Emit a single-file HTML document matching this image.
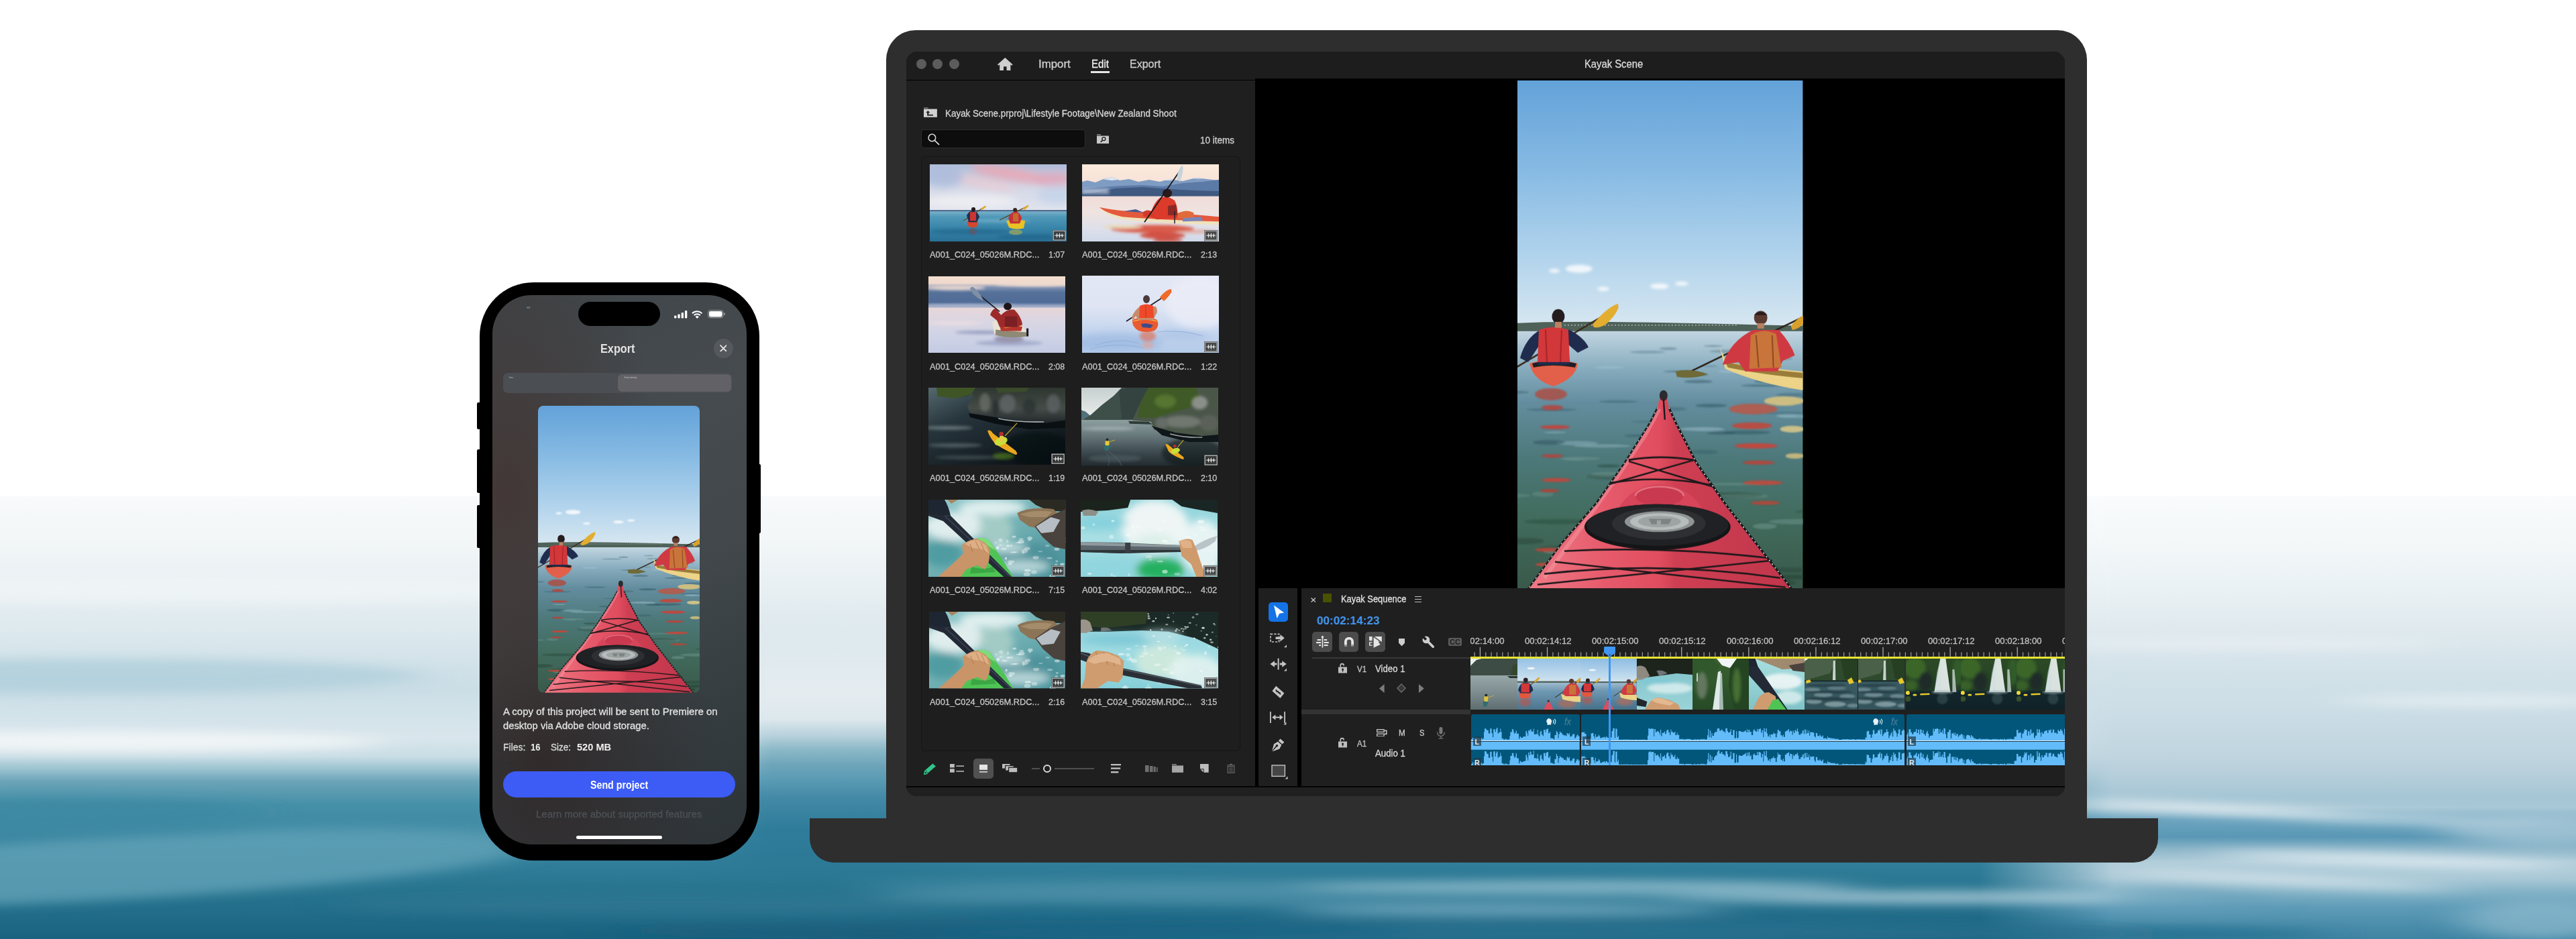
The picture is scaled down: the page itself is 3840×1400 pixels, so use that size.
<!DOCTYPE html><html lang="en"><head><meta charset="utf-8"><title>Premiere – Kayak Scene</title><style>
*{margin:0;padding:0;box-sizing:border-box}
html,body{width:3840px;height:1400px;overflow:hidden;background:#fff}
body{position:relative;font-family:"Liberation Sans",sans-serif;}
.a{position:absolute}
.t{position:absolute;white-space:pre;transform-origin:0 50%;-webkit-text-stroke:.3px currentColor}
svg{position:absolute;overflow:hidden}
</style></head><body>
<svg width="0" height="0" style="left:0;top:0"><defs><filter id="b1" x="-20%" y="-40%" width="140%" height="180%"><feGaussianBlur stdDeviation="1.2"/></filter><filter id="b2" x="-20%" y="-20%" width="140%" height="140%"><feGaussianBlur stdDeviation="2"/></filter><filter id="b4" x="-30%" y="-30%" width="160%" height="160%"><feGaussianBlur stdDeviation="6"/></filter><linearGradient id="kSky" x1="0" y1="0" x2="0" y2="1"><stop offset="0" stop-color="#63a2d9"/><stop offset="0.35" stop-color="#86bae3"/><stop offset="0.7" stop-color="#b1d3ec"/><stop offset="1" stop-color="#d9e8f1"/></linearGradient><linearGradient id="kWat" x1="0" y1="0" x2="0" y2="1"><stop offset="0" stop-color="#c3d6e2"/><stop offset="0.07" stop-color="#a6c2d1"/><stop offset="0.15" stop-color="#86abbd"/><stop offset="0.28" stop-color="#638d9e"/><stop offset="0.5" stop-color="#4c7879"/><stop offset="0.72" stop-color="#426c5e"/><stop offset="1" stop-color="#39594a"/></linearGradient><linearGradient id="kBow" x1="0" y1="0" x2="1" y2="0"><stop offset="0" stop-color="#ef7a86"/><stop offset="0.3" stop-color="#e65a6b"/><stop offset="0.5" stop-color="#e04d5f"/><stop offset="0.56" stop-color="#cf3f53"/><stop offset="1" stop-color="#c0364b"/></linearGradient><linearGradient id="p1s" x1="0" y1="0" x2="0" y2="1"><stop offset="0" stop-color="#aebcd9"/><stop offset="0.45" stop-color="#d3d7e6"/><stop offset="1" stop-color="#e0e4ee"/></linearGradient><linearGradient id="p1w" x1="0" y1="0" x2="0" y2="1"><stop offset="0" stop-color="#7fb3cb"/><stop offset="0.2" stop-color="#4f98b8"/><stop offset="0.6" stop-color="#3683a8"/><stop offset="1" stop-color="#2a7097"/></linearGradient><linearGradient id="p2s" x1="0" y1="0" x2="0" y2="1"><stop offset="0" stop-color="#fbeadb"/><stop offset="1" stop-color="#f3dcd6"/></linearGradient><linearGradient id="p2w" x1="0" y1="0" x2="0" y2="1"><stop offset="0" stop-color="#f0dcd8"/><stop offset="0.35" stop-color="#efe3e0"/><stop offset="0.7" stop-color="#dfe0ea"/><stop offset="1" stop-color="#cfd9ea"/></linearGradient><linearGradient id="p3s" x1="0" y1="0" x2="0" y2="1"><stop offset="0" stop-color="#f4dfcf"/><stop offset="0.22" stop-color="#eed8cd"/><stop offset="0.34" stop-color="#7f91b2"/><stop offset="0.5" stop-color="#55719a"/><stop offset="0.82" stop-color="#506c96"/><stop offset="0.9" stop-color="#8c9dbd"/><stop offset="1" stop-color="#b9bfd4"/></linearGradient><linearGradient id="p3w" x1="0" y1="0" x2="0" y2="1"><stop offset="0" stop-color="#e7d6d8"/><stop offset="0.25" stop-color="#dcd6e2"/><stop offset="0.6" stop-color="#cfd3e6"/><stop offset="1" stop-color="#c3cbe3"/></linearGradient><linearGradient id="p4b" x1="0" y1="0" x2="0" y2="1"><stop offset="0" stop-color="#e3e7f4"/><stop offset="0.4" stop-color="#dfe5f3"/><stop offset="0.7" stop-color="#c6d6ee"/><stop offset="1" stop-color="#b4cbe9"/></linearGradient><linearGradient id="p5w" x1="0" y1="0" x2="0.8" y2="1"><stop offset="0" stop-color="#55696e"/><stop offset="0.35" stop-color="#27353c"/><stop offset="1" stop-color="#0b1116"/></linearGradient><linearGradient id="p5c" x1="0" y1="0" x2="0" y2="1"><stop offset="0" stop-color="#2e3630"/><stop offset="0.6" stop-color="#454c48"/><stop offset="1" stop-color="#22282a"/></linearGradient><linearGradient id="p6w" x1="0" y1="0" x2="0" y2="1"><stop offset="0" stop-color="#8e9fa0"/><stop offset="0.3" stop-color="#6c7d80"/><stop offset="0.7" stop-color="#3d4a4f"/><stop offset="1" stop-color="#222b30"/></linearGradient><linearGradient id="p6s" x1="0" y1="0" x2="0" y2="1"><stop offset="0" stop-color="#c7d0cf"/><stop offset="1" stop-color="#eef1ef"/></linearGradient><linearGradient id="p7w" x1="0" y1="0" x2="1" y2="1"><stop offset="0" stop-color="#93cacd"/><stop offset="0.4" stop-color="#78b5b8"/><stop offset="1" stop-color="#458f98"/></linearGradient><linearGradient id="p8w" x1="0" y1="0" x2="0" y2="1"><stop offset="0" stop-color="#8fd2da"/><stop offset="0.5" stop-color="#a9dfe4"/><stop offset="1" stop-color="#8fd4da"/></linearGradient><linearGradient id="p10w" x1="0" y1="0" x2="0" y2="1"><stop offset="0" stop-color="#8fd0dc"/><stop offset="0.5" stop-color="#9fdbe2"/><stop offset="1" stop-color="#86cfd8"/></linearGradient><linearGradient id="cfw" x1="0" y1="0" x2="0" y2="1"><stop offset="0" stop-color="#98a7a8"/><stop offset="0.5" stop-color="#7d8d8f"/><stop offset="1" stop-color="#5d6d70"/></linearGradient><linearGradient id="cks" x1="0" y1="0" x2="0" y2="1"><stop offset="0" stop-color="#8fbde3"/><stop offset="1" stop-color="#d3e5f0"/></linearGradient><linearGradient id="ckw" x1="0" y1="0" x2="0" y2="1"><stop offset="0" stop-color="#a3bfd0"/><stop offset="0.3" stop-color="#6f98b2"/><stop offset="1" stop-color="#45708a"/></linearGradient><linearGradient id="cw1" x1="0" y1="0" x2="0" y2="1"><stop offset="0" stop-color="#7fc2c9"/><stop offset="1" stop-color="#9ad3d8"/></linearGradient><linearGradient id="cfa" x1="0" y1="0" x2="0" y2="1"><stop offset="0" stop-color="#3a6230"/><stop offset="1" stop-color="#264a26"/></linearGradient><linearGradient id="cw2" x1="0" y1="0" x2="0" y2="1"><stop offset="0" stop-color="#a9dfe0"/><stop offset="1" stop-color="#7fc2c6"/></linearGradient><linearGradient id="cla" x1="0" y1="0" x2="0" y2="1"><stop offset="0" stop-color="#4a6a72"/><stop offset="0.5" stop-color="#3a5a62"/><stop offset="1" stop-color="#33525a"/></linearGradient><linearGradient id="cf3" x1="0" y1="0" x2="0" y2="1"><stop offset="0" stop-color="#2c4a26"/><stop offset="0.6" stop-color="#233f24"/><stop offset="0.66" stop-color="#12262c"/><stop offset="1" stop-color="#102228"/></linearGradient></defs><symbol id="kayak" viewBox="0 0 426 758" preserveAspectRatio="none"><rect width="426" height="374" fill="url(#kSky)"/><g fill="#fff" opacity=".8" filter="url(#b2)"><ellipse cx="92" cy="281" rx="20" ry="6"/><ellipse cx="212" cy="307" rx="14" ry="4"/><ellipse cx="128" cy="311" rx="9" ry="3"/><ellipse cx="245" cy="303" rx="10" ry="3"/><ellipse cx="55" cy="284" rx="8" ry="3"/></g><rect y="373" width="426" height="385" fill="url(#kWat)"/><path d="M0 362 L40 360.5 L120 360 L200 361 L300 363 L380 365 L426 366 V374 H0 Z" fill="#4f6259"/><path d="M70 365 H330" stroke="#c9d2cf" stroke-width="1.6" stroke-dasharray="2 3" opacity=".75"/><g filter="url(#b1)"><ellipse cx="321" cy="619" rx="45" ry="4.2" fill="#213f31" opacity="0.48"/><ellipse cx="194" cy="405" rx="26" ry="1.8" fill="#274a56" opacity="0.28"/><ellipse cx="93" cy="564" rx="31" ry="2.8" fill="#7fa39a" opacity="0.32"/><ellipse cx="402" cy="496" rx="32" ry="1.5" fill="#274a56" opacity="0.28"/><ellipse cx="38" cy="617" rx="16" ry="4.0" fill="#7fa39a" opacity="0.31"/><ellipse cx="381" cy="749" rx="34" ry="5.5" fill="#213f31" opacity="0.42"/><ellipse cx="413" cy="469" rx="27" ry="2.8" fill="#274a56" opacity="0.32"/><ellipse cx="56" cy="525" rx="17" ry="1.4" fill="#9fc0cf" opacity="0.43"/><ellipse cx="292" cy="396" rx="14" ry="1.2" fill="#274a56" opacity="0.37"/><ellipse cx="201" cy="509" rx="31" ry="1.3" fill="#274a56" opacity="0.26"/><ellipse cx="369" cy="665" rx="18" ry="4.2" fill="#7fa39a" opacity="0.42"/><ellipse cx="1" cy="398" rx="11" ry="2.1" fill="#9fc0cf" opacity="0.48"/><ellipse cx="413" cy="730" rx="36" ry="3.3" fill="#213f31" opacity="0.44"/><ellipse cx="324" cy="434" rx="26" ry="2.3" fill="#9fc0cf" opacity="0.53"/><ellipse cx="137" cy="428" rx="22" ry="2.3" fill="#9fc0cf" opacity="0.53"/><ellipse cx="124" cy="591" rx="26" ry="2.0" fill="#7fa39a" opacity="0.29"/><ellipse cx="438" cy="643" rx="23" ry="1.9" fill="#213f31" opacity="0.38"/><ellipse cx="89" cy="541" rx="31" ry="3.2" fill="#9fc0cf" opacity="0.38"/><ellipse cx="401" cy="415" rx="9" ry="1.6" fill="#274a56" opacity="0.28"/><ellipse cx="417" cy="658" rx="42" ry="4.1" fill="#7fa39a" opacity="0.38"/><ellipse cx="369" cy="449" rx="16" ry="1.8" fill="#274a56" opacity="0.46"/><ellipse cx="189" cy="746" rx="44" ry="4.7" fill="#7fa39a" opacity="0.34"/><ellipse cx="47" cy="540" rx="24" ry="3.6" fill="#274a56" opacity="0.41"/><ellipse cx="136" cy="575" rx="17" ry="2.1" fill="#213f31" opacity="0.47"/><ellipse cx="342" cy="525" rx="35" ry="2.8" fill="#274a56" opacity="0.44"/><ellipse cx="304" cy="526" rx="21" ry="2.3" fill="#274a56" opacity="0.42"/><ellipse cx="415" cy="501" rx="29" ry="2.4" fill="#9fc0cf" opacity="0.41"/><ellipse cx="289" cy="485" rx="23" ry="2.7" fill="#274a56" opacity="0.45"/><ellipse cx="276" cy="520" rx="33" ry="3.0" fill="#9fc0cf" opacity="0.50"/><ellipse cx="297" cy="708" rx="62" ry="5.1" fill="#213f31" opacity="0.38"/><ellipse cx="365" cy="455" rx="31" ry="1.8" fill="#274a56" opacity="0.43"/><ellipse cx="59" cy="658" rx="48" ry="3.5" fill="#213f31" opacity="0.36"/><ellipse cx="336" cy="620" rx="39" ry="3.6" fill="#7fa39a" opacity="0.30"/><ellipse cx="279" cy="554" rx="20" ry="3.0" fill="#274a56" opacity="0.26"/><ellipse cx="84" cy="565" rx="16" ry="1.8" fill="#7fa39a" opacity="0.30"/><ellipse cx="-4" cy="465" rx="21" ry="1.7" fill="#274a56" opacity="0.40"/><ellipse cx="395" cy="481" rx="11" ry="1.9" fill="#9fc0cf" opacity="0.37"/><ellipse cx="362" cy="436" rx="17" ry="1.0" fill="#274a56" opacity="0.27"/><ellipse cx="136" cy="591" rx="35" ry="4.0" fill="#213f31" opacity="0.35"/><ellipse cx="275" cy="688" rx="34" ry="2.3" fill="#213f31" opacity="0.39"/><ellipse cx="425" cy="740" rx="49" ry="3.3" fill="#213f31" opacity="0.25"/><ellipse cx="240" cy="434" rx="22" ry="1.2" fill="#274a56" opacity="0.47"/><ellipse cx="179" cy="530" rx="19" ry="1.9" fill="#274a56" opacity="0.34"/><ellipse cx="400" cy="741" rx="48" ry="3.0" fill="#213f31" opacity="0.37"/><ellipse cx="127" cy="545" rx="43" ry="2.5" fill="#9fc0cf" opacity="0.39"/><ellipse cx="266" cy="439" rx="19" ry="1.4" fill="#274a56" opacity="0.46"/><ellipse cx="225" cy="400" rx="13" ry="2.1" fill="#274a56" opacity="0.31"/><ellipse cx="51" cy="491" rx="37" ry="1.7" fill="#274a56" opacity="0.37"/><ellipse cx="258" cy="627" rx="44" ry="2.0" fill="#213f31" opacity="0.33"/><ellipse cx="135" cy="587" rx="25" ry="2.9" fill="#7fa39a" opacity="0.36"/><ellipse cx="252" cy="663" rx="19" ry="2.6" fill="#7fa39a" opacity="0.52"/><ellipse cx="231" cy="715" rx="20" ry="4.6" fill="#7fa39a" opacity="0.42"/><ellipse cx="271" cy="650" rx="36" ry="4.4" fill="#7fa39a" opacity="0.37"/><ellipse cx="70" cy="702" rx="32" ry="4.6" fill="#7fa39a" opacity="0.50"/><ellipse cx="179" cy="645" rx="28" ry="4.0" fill="#213f31" opacity="0.29"/><ellipse cx="233" cy="567" rx="30" ry="2.2" fill="#7fa39a" opacity="0.43"/><ellipse cx="11" cy="687" rx="28" ry="4.5" fill="#213f31" opacity="0.42"/><ellipse cx="312" cy="404" rx="26" ry="2.2" fill="#274a56" opacity="0.26"/><ellipse cx="81" cy="698" rx="47" ry="5.0" fill="#213f31" opacity="0.28"/><ellipse cx="402" cy="500" rx="16" ry="2.4" fill="#9fc0cf" opacity="0.30"/><ellipse cx="0" cy="619" rx="20" ry="2.7" fill="#7fa39a" opacity="0.27"/><ellipse cx="321" cy="602" rx="46" ry="1.9" fill="#7fa39a" opacity="0.34"/><ellipse cx="205" cy="611" rx="49" ry="2.6" fill="#7fa39a" opacity="0.46"/><ellipse cx="270" cy="449" rx="21" ry="2.5" fill="#274a56" opacity="0.41"/><ellipse cx="234" cy="490" rx="18" ry="2.6" fill="#274a56" opacity="0.28"/><ellipse cx="151" cy="479" rx="29" ry="1.5" fill="#274a56" opacity="0.41"/><ellipse cx="287" cy="426" rx="11" ry="1.1" fill="#274a56" opacity="0.31"/><ellipse cx="201" cy="711" rx="34" ry="4.6" fill="#7fa39a" opacity="0.47"/><ellipse cx="49" cy="414" rx="27" ry="1.9" fill="#9fc0cf" opacity="0.28"/><ellipse cx="286" cy="745" rx="59" ry="2.6" fill="#213f31" opacity="0.34"/></g><g filter="url(#b1)" opacity=".9"><ellipse cx="50" cy="468" rx="24" ry="9" fill="#a8524c"/><ellipse cx="52" cy="488" rx="16" ry="4" fill="#b04a44"/><ellipse cx="56" cy="517" rx="22" ry="3" fill="#c2423c"/><ellipse cx="52" cy="560" rx="16" ry="2.5" fill="#b8423a"/><ellipse cx="58" cy="596" rx="22" ry="3" fill="#c2463c"/><ellipse cx="48" cy="612" rx="14" ry="2.5" fill="#b4423a"/><ellipse cx="46" cy="700" rx="20" ry="3" fill="#b8443a"/><ellipse cx="52" cy="722" rx="26" ry="3" fill="#c24a3e"/><ellipse cx="352" cy="490" rx="36" ry="8" fill="#b55a4c"/><ellipse cx="350" cy="515" rx="30" ry="5" fill="#c04a3e"/><ellipse cx="356" cy="545" rx="32" ry="4" fill="#c8443a"/><ellipse cx="360" cy="570" rx="24" ry="3" fill="#b8443a"/><ellipse cx="366" cy="600" rx="30" ry="3.5" fill="#c2483c"/><ellipse cx="370" cy="630" rx="22" ry="3" fill="#b4463a"/><ellipse cx="398" cy="478" rx="30" ry="7" fill="#d8c27f"/><ellipse cx="410" cy="520" rx="18" ry="5" fill="#d9c78a"/><ellipse cx="414" cy="560" rx="14" ry="4" fill="#cdbb80"/></g><path d="M-2 428 L150 338" stroke="#3a2a18" stroke-width="2.5"/><path d="M112 364 Q134 338 150 333 Q154 342 134 362 Q124 370 114 368 Z" fill="#e3ad2f"/><path d="M18 422 Q52 412 90 422 Q88 444 54 456 Q24 448 18 422 Z" fill="#e2604a"/><path d="M22 422 Q52 414 88 422 L86 428 Q52 422 24 428 Z" fill="#1d1d22"/><path d="M4 414 Q12 384 34 372 L78 372 Q100 384 106 398 L90 406 L76 394 L78 424 L30 424 L32 396 L16 420 Z" fill="#1f2c4e"/><path d="M32 372 Q54 364 76 372 L78 420 L30 420 Z" fill="#d2373a"/><path d="M42 372 L44 420 M66 372 L64 420" stroke="#a82428" stroke-width="2"/><ellipse cx="61" cy="352" rx="9.5" ry="11" fill="#241c1e"/><rect x="56" y="360" width="10" height="9" fill="#b98262"/><path d="M246 440 L428 352" stroke="#2a2018" stroke-width="2.5"/><path d="M236 434 Q258 428 284 438 Q262 446 238 442 Z" fill="#6f6a38"/><path d="M408 366 Q420 352 428 350 L428 362 Q418 372 410 372 Z" fill="#d9a12b"/><path d="M302 398 L310 430 Q360 452 426 462 L426 434 Q360 428 312 420 Z" fill="#ecd387"/><path d="M310 420 Q360 430 426 436 L426 444 Q360 438 314 428 Z" fill="#9a7c3a"/><path d="M306 424 Q318 388 352 372 L390 372 Q408 392 414 410 L396 418 L388 434 L340 434 L330 420 Z" fill="#cf3a42"/><path d="M348 380 Q366 368 386 378 L394 428 L346 430 Z" fill="#c9743a"/><path d="M356 380 L360 428 M380 380 L382 428" stroke="#8d4a22" stroke-width="2"/><ellipse cx="363" cy="354" rx="10" ry="10.5" fill="#5a3a30"/><path d="M353 350 Q363 340 373 350 Z" fill="#2a1c1c"/><rect x="358" y="362" width="10" height="8" fill="#b77f5f"/><path d="M218 465 Q223 468 226 488 L236 510 L267 570 L309 630 L355 689 L409 758 H16 L67 689 L118 630 L160 570 L198 510 L209 488 Q212 468 218 465 Z" fill="url(#kBow)"/><path d="M212 490 L190 530 L150 590 L100 660 L40 742" stroke="#f6a0a8" stroke-width="6" fill="none" opacity=".45"/><ellipse cx="218" cy="470" rx="6" ry="8" fill="#2b2b2e"/><path d="M218 476 L220 506" stroke="#1d1a1c" stroke-width="2.4"/><g stroke="#1f191b" stroke-width="2.6" fill="none"><path d="M166 566 Q214 558 262 566"/><path d="M140 600 Q214 588 292 604"/><path d="M166 568 L292 606 M264 566 L138 602"/><path d="M70 702 Q214 694 372 712"/><path d="M40 736 Q214 716 392 742"/><path d="M30 752 L380 716 M56 718 L400 756"/></g><path d="M226 488 L236 510 L267 570 L309 630 L355 689 L409 758" stroke="#15181a" stroke-width="3" fill="none"/><path d="M226 488 L236 510 L267 570 L309 630 L355 689 L409 758" stroke="#e9e9e9" stroke-width="1.6" stroke-dasharray="2 5" fill="none"/><path d="M209 488 L198 510 L160 570 L118 630 L67 689 L16 758" stroke="#1a1c1e" stroke-width="2.6" fill="none"/><path d="M209 488 L198 510 L160 570 L118 630 L67 689 L16 758" stroke="#dcdcdc" stroke-width="1.4" stroke-dasharray="2 6" fill="none"/><path d="M150 640 Q168 606 212 602 Q258 606 276 640 Z" fill="#d6455a"/><ellipse cx="212" cy="620" rx="36" ry="14" fill="#c93a50"/><path d="M176 620 A36 14 0 0 1 248 620" fill="none" stroke="#f08c98" stroke-width="2.4" opacity=".7"/><ellipse cx="209" cy="666" rx="109" ry="34" fill="#141517"/><ellipse cx="209" cy="663" rx="106" ry="31" fill="#202124"/><ellipse cx="211" cy="661" rx="70" ry="24" fill="#2e2f33"/><ellipse cx="212" cy="658" rx="52" ry="15.5" fill="#8f9595"/><ellipse cx="212" cy="658" rx="44" ry="12.5" fill="#b7bcbc"/><ellipse cx="212" cy="658" rx="32" ry="8.5" fill="#9ea4a4"/><path d="M196 654 H230 L226 662 H214 V656 H208 V662 H200 Z" fill="#7d8383"/></symbol><symbol id="p1" viewBox="0 0 204 115" preserveAspectRatio="none"><rect width="204" height="70" fill="url(#p1s)"/><g filter="url(#b4)"><ellipse cx="120" cy="14" rx="60" ry="10" fill="#e9a9b6" opacity=".9" transform="rotate(10 120 14)"/><ellipse cx="185" cy="22" rx="30" ry="10" fill="#e3a2b6" opacity=".8"/><ellipse cx="70" cy="26" rx="60" ry="7" fill="#efc9cf" opacity=".7" transform="rotate(12 70 26)"/><ellipse cx="20" cy="18" rx="30" ry="16" fill="#a9bbdc" opacity=".8"/><ellipse cx="190" cy="45" rx="30" ry="14" fill="#c3d3ea" opacity=".8"/><ellipse cx="60" cy="55" rx="70" ry="10" fill="#f1f1f4" opacity=".8"/></g><rect y="69" width="204" height="46" fill="url(#p1w)"/><rect y="68" width="204" height="2" fill="#4b6588"/><g filter="url(#b2)" opacity=".5"><ellipse cx="60" cy="100" rx="60" ry="4" fill="#1f5d84"/><ellipse cx="150" cy="108" rx="50" ry="4" fill="#1f5d84"/><ellipse cx="100" cy="84" rx="50" ry="2" fill="#9ccbe0"/></g><path d="M50 84 L82 63" stroke="#5b4a20" stroke-width="1.2"/><path d="M76 66 L83 61.5 L84 63.5 L78 68 Z" fill="#e2a92a"/><path d="M55 85 Q64 80 72 85 L70 93 Q64 95 58 93 Z" fill="#d4472f"/><path d="M55 76 Q58 70 64 69 Q71 70 74 78 L70 86 L58 86 Z" fill="#232e4c"/><rect x="60" y="71" width="9" height="13" fill="#cf3434"/><circle cx="65" cy="67" r="3" fill="#20181a"/><ellipse cx="64" cy="100" rx="6" ry="5" fill="#7a4a55" opacity=".5"/><path d="M104 83 L146 62" stroke="#5b4a20" stroke-width="1.2"/><path d="M138 66 L146 60.5 L147.5 62.5 L141 68 Z" fill="#e2a92a"/><path d="M114 84 Q128 80 142 84 L140 95 Q128 98 118 94 Z" fill="#e9c224"/><path d="M117 80 Q120 72 127 70 Q134 71 137 80 L134 88 L120 88 Z" fill="#c6303a"/><rect x="124" y="73" width="8" height="12" fill="#c46a2e"/><circle cx="127" cy="68" r="3" fill="#3a2420"/><ellipse cx="128" cy="101" rx="10" ry="4" fill="#b5b04a" opacity=".6"/></symbol><symbol id="p2" viewBox="0 0 204 115" preserveAspectRatio="none"><rect width="204" height="50" fill="url(#p2s)"/><path d="M0 26 L8 24 L20 27 L34 21 L46 19 L56 24 L70 22 L84 26 L100 23 L116 26 L130 22 L150 25 L170 20 L186 22 L204 24 V48 H0 Z" fill="#7f9cc3"/><path d="M30 22 L46 19 L54 23 L44 24 Z M120 24 L130 22 L138 24 Z M164 21 L170 20 L180 22 Z" fill="#dfe6f1"/><path d="M0 36 L30 34 L60 32 L90 31 L120 33 L150 28 L180 26 L204 23 V48 H0 Z" fill="#5c7aa6"/><path d="M0 44 L20 42 L50 36 L90 34 L130 37 L170 39 L204 40 V48.5 H0 Z" fill="#3f5980"/><rect y="36" width="40" height="8" fill="#dfe3ee" opacity=".55" filter="url(#b2)"/><rect y="47.5" width="204" height="67.5" fill="url(#p2w)"/><g filter="url(#b2)"><ellipse cx="105" cy="96" rx="62" ry="6" fill="#d8452e" opacity=".85"/><ellipse cx="120" cy="106" rx="34" ry="5" fill="#d03a28" opacity=".85"/><ellipse cx="60" cy="93" rx="30" ry="2.5" fill="#e9d9b8"/><ellipse cx="128" cy="113" rx="22" ry="3" fill="#c8402e" opacity=".8"/><ellipse cx="170" cy="100" rx="30" ry="3" fill="#e59580" opacity=".6"/></g><path d="M26 64 Q60 74 110 76 L204 82 V90 Q120 88 60 82 Q36 76 26 64 Z" fill="#efe2bd"/><path d="M26 64 Q60 71 110 72 Q160 74 204 78 V85 Q120 83 60 78 Q36 73 26 64 Z" fill="#e4593c"/><path d="M62 70 L80 67 L92 72 Z" fill="#47598f"/><path d="M140 74 Q156 66 166 72 L168 80 L140 80 Z" fill="#e16a3a"/><path d="M150 80 L178 78 L180 84 L150 85 Z" fill="#7a86b8"/><path d="M102 78 Q104 60 116 50 Q128 46 138 54 Q144 66 142 80 L112 82 Z" fill="#dc3a2a"/><path d="M90 72 Q96 66 104 70 L108 78 L92 78 Z" fill="#d43a2a"/><path d="M128 62 L140 60 L142 76 L128 76 Z" fill="#8a2a26"/><ellipse cx="127" cy="43" rx="7" ry="6.5" fill="#2a1a1c"/><path d="M147 8 L93 86" stroke="#1a1a1e" stroke-width="1.8"/><path d="M141 22 Q143 6 150 1 Q152 10 146 26 Z" fill="#c7d3da"/><path d="M138 70 L138 88" stroke="#2a2224" stroke-width="1.5"/></symbol><symbol id="p3" viewBox="0 0 204 115" preserveAspectRatio="none"><rect width="204" height="48" fill="url(#p3s)" /><rect y="0" width="204" height="115" fill="none"/><g filter="url(#b2)"><ellipse cx="40" cy="17" rx="45" ry="3.5" fill="#e9d7d0"/><ellipse cx="160" cy="12" rx="60" ry="3" fill="#f0dccf"/><ellipse cx="60" cy="44" rx="70" ry="2" fill="#a7b2cd"/></g><rect y="47" width="204" height="68" fill="url(#p3w)"/><g filter="url(#b2)" opacity=".6"><ellipse cx="80" cy="84" rx="40" ry="2.5" fill="#6f7da6"/><ellipse cx="120" cy="100" rx="50" ry="4" fill="#8c97bd"/><ellipse cx="40" cy="70" rx="40" ry="3" fill="#f3e3df"/><ellipse cx="120" cy="94" rx="22" ry="6" fill="#7c6f8c"/></g><path d="M66 20 L106 53" stroke="#15151a" stroke-width="1.6"/><path d="M62 18 Q64 14 68 17 Q78 26 82 36 Q76 36 66 26 Z" fill="#7f8fa6"/><path d="M95 68 L100 66 L142 76 L146 88 Q120 92 98 86 Z" fill="#e8e3d2"/><path d="M100 80 L146 84 L146 90 Q120 94 100 88 Z" fill="#8f8a76"/><path d="M106 74 Q120 70 140 76 L138 82 L108 82 Z" fill="#b5352c"/><path d="M112 74 L138 70 L140 74 L114 78 Z" fill="#e07a30"/><path d="M92 58 Q94 50 100 48 L108 58 Q118 48 128 50 Q138 60 140 72 L132 76 L106 76 L102 66 Z" fill="#9c2a2a"/><path d="M114 60 H132 V76 H114 Z" fill="#7a1f24"/><ellipse cx="118" cy="45" rx="6" ry="5.5" fill="#1c1418"/><rect x="146" y="78" width="3" height="12" fill="#1a1a1a"/></symbol><symbol id="p4" viewBox="0 0 204 115" preserveAspectRatio="none"><rect width="204" height="115" fill="url(#p4b)"/><g filter="url(#b4)" opacity=".8"><ellipse cx="175" cy="40" rx="50" ry="40" fill="#eceef8"/><ellipse cx="50" cy="100" rx="70" ry="14" fill="#9fbbe2"/><ellipse cx="150" cy="88" rx="40" ry="6" fill="#a6bfe3"/></g><g fill="none" stroke="#8faedb" stroke-width="1.2" opacity=".7"><path d="M20 104 Q50 92 84 100"/><path d="M12 110 Q50 98 92 108"/><path d="M112 84 Q150 80 180 90"/></g><g filter="url(#b2)"><ellipse cx="98" cy="90" rx="12" ry="8" fill="#d9806f" opacity=".8"/><ellipse cx="98" cy="104" rx="9" ry="5" fill="#dba59d" opacity=".7"/></g><path d="M133 24 L66 68" stroke="#1c1c22" stroke-width="1.6"/><path d="M116 32 Q126 20 133 20 Q135 26 122 38 Z" fill="#f06a2a"/><path d="M75 66 Q94 58 112 66 Q116 76 108 82 Q96 86 84 82 Q74 76 75 66 Z" fill="#ea5a30"/><path d="M88 72 Q98 70 106 74 L102 78 L90 77 Z" fill="#3d4a8a"/><path d="M76 68 Q94 62 112 68" stroke="#f2b84a" stroke-width="1.3" fill="none"/><path d="M74 62 Q78 52 86 46 L110 46 Q114 54 110 58 L106 66 L84 66 L80 60 L76 66 Z" fill="#c98a6a"/><path d="M86 45 Q96 40 106 45 L107 63 L85 63 Z" fill="#ee4a2a"/><path d="M95 45 V63" stroke="#c2341c" stroke-width="1"/><ellipse cx="96" cy="35" rx="5" ry="6" fill="#4a3a3a"/></symbol><symbol id="p5" viewBox="0 0 204 115" preserveAspectRatio="none"><rect width="204" height="115" fill="url(#p5w)"/><g filter="url(#b2)" opacity=".5"><ellipse cx="30" cy="60" rx="36" ry="3" fill="#9fb0b2"/><ellipse cx="40" cy="86" rx="40" ry="3" fill="#7f9092"/><ellipse cx="60" cy="104" rx="50" ry="3" fill="#5a6a6c"/><ellipse cx="160" cy="90" rx="50" ry="24" fill="#05080a"/></g><path d="M12 0 H204 V48 L176 52 L140 50 L104 44 L62 38 L58 28 L68 10 L52 14 L18 12 Z" fill="url(#p5c)"/><path d="M12 0 H70 L64 10 L40 16 L14 13 Z" fill="#3f5526"/><path d="M100 0 H150 L146 6 L104 8 Z" fill="#3a4a2c"/><g filter="url(#b2)" opacity=".75"><ellipse cx="84" cy="22" rx="8" ry="14" fill="#6a6f68"/><ellipse cx="118" cy="24" rx="12" ry="14" fill="#63686a"/><ellipse cx="150" cy="28" rx="10" ry="12" fill="#2a3030"/><ellipse cx="186" cy="24" rx="10" ry="14" fill="#5f6466"/><ellipse cx="100" cy="30" rx="5" ry="12" fill="#23292a"/></g><path d="M60 38 L104 45 L140 51 L176 53 L204 49 V60 L150 62 L100 54 L62 44 Z" fill="#0a0f12"/><path d="M104 46 Q130 52 172 51" stroke="#c9d2d2" stroke-width="1.6" fill="none" opacity=".8"/><path d="M114 72 L132 53" stroke="#d8b52a" stroke-width="1.2"/><path d="M88 64 Q92 62 96 68 L130 94 Q134 100 130 100 Q110 92 98 82 Q90 72 88 64 Z" fill="#eda81f"/><ellipse cx="108" cy="80" rx="10" ry="6" fill="#c8de3a" transform="rotate(-20 108 80)"/><circle cx="108.5" cy="69" r="3.3" fill="#b0302c"/><rect x="106" y="72" width="6" height="8" fill="#e8c94a"/><ellipse cx="112" cy="102" rx="16" ry="5" fill="#4f7a1e" opacity=".7" filter="url(#b2)"/></symbol><symbol id="p6" viewBox="0 0 204 115" preserveAspectRatio="none"><rect width="204" height="50" fill="url(#p6s)"/><path d="M0 33 L6 35 L13 41 L0 48 Z" fill="#50707a"/><path d="M0 48 L14 40 L30 26 L48 12 L60 0 H110 L90 48 Z" fill="#3e4f49"/><path d="M56 4 L70 0 H100 L84 46 L60 46 Z" fill="#34433f"/><rect y="47.5" width="204" height="67.5" fill="url(#p6w)"/><g filter="url(#b2)" opacity=".55"><ellipse cx="40" cy="60" rx="40" ry="3" fill="#b9c6c6"/><ellipse cx="50" cy="104" rx="40" ry="5" fill="#55656a"/><ellipse cx="165" cy="96" rx="45" ry="22" fill="#0c1216"/></g><path d="M76 48 L84 30 L94 10 L100 0 H204 V70 L180 72 L140 68 L108 62 L104 50 Z" fill="#4a5648"/><path d="M94 10 L100 0 H170 L176 14 L160 30 L130 38 L112 44 L84 44 L86 28 Z" fill="#3f5a26"/><g filter="url(#b2)"><ellipse cx="125" cy="20" rx="16" ry="10" fill="#587830" opacity=".9"/><ellipse cx="176" cy="22" rx="12" ry="10" fill="#9a9e9a" opacity=".8"/><ellipse cx="150" cy="50" rx="28" ry="9" fill="#767c76" opacity=".85"/><ellipse cx="190" cy="52" rx="14" ry="12" fill="#5c635b" opacity=".9"/><ellipse cx="120" cy="52" rx="10" ry="8" fill="#666d67"/></g><path d="M104 56 L140 66 L180 71 L204 69 V80 L160 80 L120 70 Z" fill="#10171a"/><path d="M132 68 Q156 74 180 73" stroke="#c3cccc" stroke-width="1.4" fill="none" opacity=".8"/><path d="M70 49 L100 50 L106 54 L72 53 Z" fill="#2f3b38"/><path d="M34 84 Q38 82 44 86 L40 92 Q36 94 34 90 Z" fill="#2f6e6e"/><rect x="35.5" y="78" width="6" height="7" rx="2" fill="#e6c93a"/><circle cx="38.5" cy="76.5" r="2" fill="#1e2a2a"/><path d="M41 80 L50 77" stroke="#c8b030" stroke-width="1"/><path d="M125 83 Q128 82 132 86 L152 102 Q154 106 150 105 Q136 100 130 94 Z" fill="#eda81f"/><ellipse cx="140" cy="93" rx="7" ry="4" fill="#c8de3a" transform="rotate(-20 140 93)"/><circle cx="139" cy="86" r="2.4" fill="#b0302c"/><path d="M143 88 L152 77" stroke="#d8b52a" stroke-width="1"/><path d="M36 94 Q44 104 40 115 M40 94 Q56 104 60 115" stroke="#55666a" stroke-width="1" fill="none" opacity=".7"/></symbol><symbol id="p7" viewBox="0 0 204 115" preserveAspectRatio="none"><rect width="204" height="115" fill="url(#p7w)"/><g filter="url(#b4)"><ellipse cx="40" cy="40" rx="46" ry="22" fill="#f0f6f6" opacity=".85"/><ellipse cx="95" cy="12" rx="50" ry="12" fill="#e9f4f4" opacity=".9"/><ellipse cx="100" cy="45" rx="26" ry="22" fill="#a7cdc6" opacity=".9"/><ellipse cx="20" cy="80" rx="30" ry="20" fill="#4a9aa0" opacity=".9"/><ellipse cx="150" cy="85" rx="45" ry="22" fill="#4a8f98" opacity=".75"/><ellipse cx="140" cy="100" rx="40" ry="10" fill="#dfeeee" opacity=".7"/><ellipse cx="120" cy="72" rx="26" ry="8" fill="#e6f2f2" opacity=".7"/></g><ellipse cx="133.7" cy="64.1" rx="3.8" ry="1.1" fill="#fff" opacity="0.46"/><ellipse cx="138.0" cy="58.5" rx="3.3" ry="1.0" fill="#fff" opacity="0.43"/><ellipse cx="107.3" cy="60.4" rx="3.0" ry="2.6" fill="#fff" opacity="0.34"/><ellipse cx="123.2" cy="92.6" rx="4.8" ry="2.1" fill="#fff" opacity="0.42"/><ellipse cx="201.5" cy="57.8" rx="4.5" ry="1.5" fill="#fff" opacity="0.34"/><ellipse cx="112.3" cy="73.5" rx="4.4" ry="1.3" fill="#fff" opacity="0.47"/><ellipse cx="166.4" cy="77.3" rx="3.4" ry="1.0" fill="#fff" opacity="0.32"/><ellipse cx="121.4" cy="95.8" rx="3.0" ry="1.6" fill="#fff" opacity="0.48"/><ellipse cx="147.1" cy="73.0" rx="4.3" ry="2.4" fill="#fff" opacity="0.37"/><ellipse cx="159.7" cy="86.5" rx="4.6" ry="2.4" fill="#fff" opacity="0.39"/><ellipse cx="201.9" cy="62.1" rx="3.0" ry="2.5" fill="#fff" opacity="0.35"/><ellipse cx="150.9" cy="57.4" rx="3.8" ry="2.5" fill="#fff" opacity="0.47"/><ellipse cx="191.0" cy="73.8" rx="3.9" ry="2.1" fill="#fff" opacity="0.47"/><ellipse cx="147.4" cy="105.4" rx="4.8" ry="1.9" fill="#fff" opacity="0.50"/><ellipse cx="106.3" cy="97.1" rx="3.8" ry="3.0" fill="#fff" opacity="0.55"/><ellipse cx="129.6" cy="78.1" rx="3.8" ry="0.9" fill="#fff" opacity="0.44"/><ellipse cx="117.5" cy="62.0" rx="1.7" ry="2.5" fill="#fff" opacity="0.34"/><ellipse cx="125.8" cy="78.5" rx="4.5" ry="1.1" fill="#fff" opacity="0.43"/><ellipse cx="157.1" cy="108.0" rx="4.4" ry="2.7" fill="#fff" opacity="0.38"/><ellipse cx="143.2" cy="76.5" rx="4.6" ry="2.9" fill="#fff" opacity="0.35"/><ellipse cx="118.3" cy="68.9" rx="2.3" ry="1.9" fill="#fff" opacity="0.48"/><ellipse cx="127.3" cy="55.2" rx="3.0" ry="1.7" fill="#fff" opacity="0.47"/><ellipse cx="199.1" cy="96.4" rx="3.3" ry="2.2" fill="#fff" opacity="0.50"/><ellipse cx="105.6" cy="109.0" rx="4.2" ry="2.7" fill="#fff" opacity="0.54"/><ellipse cx="140.8" cy="78.9" rx="1.9" ry="2.2" fill="#fff" opacity="0.32"/><ellipse cx="107.0" cy="67.5" rx="2.1" ry="1.6" fill="#fff" opacity="0.32"/><ellipse cx="100.0" cy="64.1" rx="1.9" ry="1.7" fill="#fff" opacity="0.31"/><ellipse cx="190.9" cy="91.8" rx="2.0" ry="1.4" fill="#fff" opacity="0.40"/><ellipse cx="137.9" cy="62.4" rx="4.5" ry="3.0" fill="#fff" opacity="0.44"/><ellipse cx="150.3" cy="60.2" rx="1.9" ry="1.6" fill="#fff" opacity="0.38"/><ellipse cx="186.2" cy="64.7" rx="1.6" ry="2.9" fill="#fff" opacity="0.46"/><ellipse cx="115.2" cy="87.6" rx="1.6" ry="2.0" fill="#fff" opacity="0.59"/><ellipse cx="189.8" cy="96.8" rx="2.4" ry="1.7" fill="#fff" opacity="0.35"/><ellipse cx="180.3" cy="87.0" rx="4.2" ry="1.6" fill="#fff" opacity="0.37"/><ellipse cx="184.4" cy="114.1" rx="4.5" ry="2.6" fill="#fff" opacity="0.55"/><ellipse cx="176.9" cy="68.6" rx="3.3" ry="1.6" fill="#fff" opacity="0.31"/><ellipse cx="102.9" cy="71.8" rx="2.4" ry="2.4" fill="#fff" opacity="0.59"/><ellipse cx="146.5" cy="111.2" rx="5.0" ry="2.9" fill="#fff" opacity="0.41"/><ellipse cx="122.9" cy="68.6" rx="2.2" ry="1.3" fill="#fff" opacity="0.49"/><ellipse cx="193.6" cy="105.4" rx="3.2" ry="2.3" fill="#fff" opacity="0.54"/><path d="M150 0 H204 V18 L178 16 L160 8 Z" fill="#2a2a22"/><path d="M132 20 Q150 10 186 14 L196 24 L170 44 L150 40 L136 30 Z" fill="#8c7457"/><path d="M136 22 Q156 14 184 18 L176 26 L150 26 Z" fill="#a48b69"/><path d="M158 40 L178 26 L204 14 V74 L186 70 L170 56 Z" fill="#4a423d"/><path d="M160 40 L182 26 L196 30 L186 48 L168 50 Z" fill="#c9d3dc" opacity=".85"/><path d="M28 0 H44 L34 6 Z" fill="#a8855e"/><path d="M45 115 L60 94 L72 58 Q80 55 90 60 L108 86 L126 115 Z" fill="#4fc455"/><path d="M72 58 Q80 55 90 60 L100 76 L84 66 Z" fill="#7fdc7a"/><path d="M64 100 Q80 106 96 100 L100 108 L62 110 Z" fill="#3aa644"/><path d="M0 0 H24 Q30 10 33 24 L0 22 Z" fill="#1e2632"/><path d="M0 20 L33 24 L124 115 L112 115 L22 32 L0 24 Z" fill="#232a36"/><path d="M24 24 L122 115" stroke="#4a5566" stroke-width="1.4" opacity=".7"/><path d="M14 115 L40 92 L52 80 L50 68 Q58 60 72 58 L84 64 L92 74 L90 92 L84 104 L72 98 L56 104 L48 115 Z" fill="#c99468"/><path d="M54 66 Q62 60 74 60 L86 68 L90 80 L80 74 L66 72 Z" fill="#deae84"/><path d="M70 62 L76 74 M78 64 L84 78 M62 66 L66 78" stroke="#a8744e" stroke-width="1" opacity=".7"/></symbol><symbol id="p8" viewBox="0 0 204 115" preserveAspectRatio="none"><rect width="204" height="115" fill="url(#p8w)"/><g filter="url(#b4)"><ellipse cx="110" cy="40" rx="50" ry="40" fill="#f2f7f5" opacity=".95"/><ellipse cx="180" cy="70" rx="30" ry="40" fill="#eef6f6" opacity=".9"/><ellipse cx="30" cy="35" rx="40" ry="10" fill="#7fd0dc" opacity=".8"/><ellipse cx="40" cy="100" rx="50" ry="14" fill="#8ed6de" opacity=".8"/><ellipse cx="118" cy="104" rx="36" ry="16" fill="#1fae5a" opacity=".95"/><ellipse cx="110" cy="62" rx="30" ry="12" fill="#d8efe6" opacity=".8"/></g><ellipse cx="46.2" cy="111.8" rx="1.9" ry="2.4" fill="#fff" opacity="0.30"/><ellipse cx="50.5" cy="114.9" rx="2.2" ry="2.2" fill="#fff" opacity="0.40"/><ellipse cx="92.4" cy="72.1" rx="2.2" ry="2.6" fill="#fff" opacity="0.30"/><ellipse cx="47.8" cy="31.7" rx="2.4" ry="1.8" fill="#fff" opacity="0.52"/><ellipse cx="77.3" cy="39.7" rx="2.4" ry="3.0" fill="#fff" opacity="0.29"/><ellipse cx="126.5" cy="62.1" rx="3.8" ry="1.6" fill="#fff" opacity="0.47"/><ellipse cx="101.5" cy="85.2" rx="4.7" ry="2.1" fill="#fff" opacity="0.31"/><ellipse cx="13.1" cy="110.4" rx="3.2" ry="1.3" fill="#fff" opacity="0.54"/><ellipse cx="118.1" cy="92.0" rx="4.6" ry="1.5" fill="#fff" opacity="0.37"/><ellipse cx="179.1" cy="41.5" rx="4.2" ry="1.1" fill="#fff" opacity="0.46"/><ellipse cx="143.2" cy="110.7" rx="4.5" ry="2.0" fill="#fff" opacity="0.33"/><ellipse cx="30.6" cy="74.9" rx="3.3" ry="1.0" fill="#fff" opacity="0.52"/><ellipse cx="103.5" cy="89.6" rx="2.3" ry="1.4" fill="#fff" opacity="0.28"/><ellipse cx="70.0" cy="52.7" rx="3.0" ry="1.7" fill="#fff" opacity="0.50"/><ellipse cx="181.9" cy="44.9" rx="2.9" ry="1.2" fill="#fff" opacity="0.46"/><ellipse cx="198.9" cy="47.2" rx="4.2" ry="1.5" fill="#fff" opacity="0.28"/><ellipse cx="155.9" cy="59.1" rx="2.1" ry="1.8" fill="#fff" opacity="0.34"/><ellipse cx="83.7" cy="67.9" rx="3.0" ry="2.1" fill="#fff" opacity="0.35"/><ellipse cx="19.4" cy="37.2" rx="1.9" ry="2.0" fill="#fff" opacity="0.37"/><ellipse cx="164.8" cy="72.9" rx="4.0" ry="3.0" fill="#fff" opacity="0.29"/><ellipse cx="3.5" cy="41.9" rx="2.9" ry="2.1" fill="#fff" opacity="0.48"/><ellipse cx="71.7" cy="112.0" rx="1.5" ry="2.7" fill="#fff" opacity="0.33"/><ellipse cx="178.5" cy="32.8" rx="4.9" ry="2.5" fill="#fff" opacity="0.55"/><ellipse cx="118.3" cy="45.1" rx="4.9" ry="1.8" fill="#fff" opacity="0.30"/><ellipse cx="123.5" cy="72.3" rx="3.2" ry="1.2" fill="#fff" opacity="0.31"/><ellipse cx="118.5" cy="68.5" rx="1.9" ry="1.8" fill="#fff" opacity="0.47"/><ellipse cx="146.0" cy="70.1" rx="2.9" ry="1.7" fill="#fff" opacity="0.34"/><ellipse cx="40.3" cy="67.9" rx="1.9" ry="2.4" fill="#fff" opacity="0.47"/><ellipse cx="124.7" cy="31.9" rx="2.8" ry="1.8" fill="#fff" opacity="0.30"/><ellipse cx="197.4" cy="94.2" rx="3.3" ry="2.4" fill="#fff" opacity="0.33"/><ellipse cx="46.8" cy="74.7" rx="4.1" ry="2.3" fill="#fff" opacity="0.28"/><ellipse cx="125.1" cy="107.3" rx="4.1" ry="2.8" fill="#fff" opacity="0.54"/><ellipse cx="45.6" cy="55.2" rx="3.4" ry="3.0" fill="#fff" opacity="0.38"/><ellipse cx="192.1" cy="102.3" rx="3.3" ry="2.2" fill="#fff" opacity="0.54"/><ellipse cx="159.8" cy="55.1" rx="4.5" ry="1.3" fill="#fff" opacity="0.38"/><ellipse cx="195.6" cy="102.0" rx="2.6" ry="1.5" fill="#fff" opacity="0.44"/><ellipse cx="171.9" cy="88.2" rx="4.8" ry="2.4" fill="#fff" opacity="0.50"/><ellipse cx="123.4" cy="60.8" rx="3.0" ry="1.9" fill="#fff" opacity="0.42"/><ellipse cx="171.0" cy="52.9" rx="1.7" ry="2.4" fill="#fff" opacity="0.35"/><ellipse cx="85.6" cy="39.9" rx="4.4" ry="1.5" fill="#fff" opacity="0.36"/><path d="M0 0 H74 L70 12 L40 16 L0 18 Z" fill="#1b241c"/><path d="M136 0 H204 V20 L170 14 L150 10 Z" fill="#1a2624"/><path d="M2 16 Q14 12 26 18 L22 24 L4 24 Z" fill="#8e9088"/><path d="M0 63 L60 64 L150 68 L150 77 L60 80 L0 78 Z" fill="#5b676c"/><path d="M0 63 L150 68 L150 71 L0 68 Z" fill="#8e9a9e"/><path d="M0 75 L150 75 L150 78 L60 80 L0 78 Z" fill="#2e363a"/><rect x="66" y="64" width="8" height="16" fill="#3a3f44"/><path d="M168 70 Q186 58 203 54 L200 62 Q188 72 172 76 Z" fill="#b8c4c8"/><path d="M146 62 Q158 56 166 60 L172 74 L178 92 L186 115 L172 115 L164 96 L150 84 Z" fill="#cf9a6c"/><path d="M146 62 Q156 58 164 62 L166 72 L152 72 Z" fill="#e0b088"/></symbol><symbol id="p10" viewBox="0 0 204 115" preserveAspectRatio="none"><rect width="204" height="115" fill="url(#p10w)"/><path d="M0 0 H204 V56 L170 40 L130 30 L90 28 L40 30 L0 30 Z" fill="#1b2a26"/><path d="M0 0 H100 L96 18 L40 24 L0 22 Z" fill="#2f3f26"/><g filter="url(#b4)"><ellipse cx="120" cy="75" rx="40" ry="26" fill="#cfe9dc" opacity=".95"/><ellipse cx="170" cy="90" rx="40" ry="26" fill="#e3f3f1" opacity=".9"/><ellipse cx="60" cy="42" rx="60" ry="8" fill="#7cc8d6" opacity=".9"/><ellipse cx="120" cy="36" rx="30" ry="8" fill="#bfe3e6" opacity=".8"/></g><ellipse cx="155.1" cy="25.7" rx="1.8" ry="0.7" fill="#fff" opacity="0.73"/><ellipse cx="183.9" cy="39.2" rx="1.1" ry="1.0" fill="#fff" opacity="0.53"/><ellipse cx="118.5" cy="57.2" rx="2.6" ry="0.5" fill="#fff" opacity="0.74"/><ellipse cx="158.8" cy="22.9" rx="1.3" ry="1.2" fill="#fff" opacity="0.58"/><ellipse cx="168.2" cy="39.7" rx="1.0" ry="1.3" fill="#fff" opacity="0.79"/><ellipse cx="200.5" cy="36.8" rx="0.9" ry="0.5" fill="#fff" opacity="0.45"/><ellipse cx="197.3" cy="18.2" rx="1.5" ry="1.5" fill="#fff" opacity="0.53"/><ellipse cx="152.6" cy="26.2" rx="0.9" ry="1.1" fill="#fff" opacity="0.74"/><ellipse cx="107.8" cy="13.5" rx="1.5" ry="0.5" fill="#fff" opacity="0.60"/><ellipse cx="183.3" cy="39.5" rx="1.8" ry="1.4" fill="#fff" opacity="0.46"/><ellipse cx="154.7" cy="22.5" rx="1.9" ry="0.6" fill="#fff" opacity="0.71"/><ellipse cx="101.0" cy="10.0" rx="2.3" ry="1.5" fill="#fff" opacity="0.57"/><ellipse cx="137.2" cy="14.7" rx="1.3" ry="1.1" fill="#fff" opacity="0.47"/><ellipse cx="103.6" cy="27.3" rx="1.1" ry="1.2" fill="#fff" opacity="0.73"/><ellipse cx="178.6" cy="28.8" rx="1.4" ry="0.9" fill="#fff" opacity="0.40"/><ellipse cx="171.2" cy="19.9" rx="1.4" ry="0.6" fill="#fff" opacity="0.58"/><ellipse cx="156.4" cy="23.4" rx="2.4" ry="1.2" fill="#fff" opacity="0.50"/><ellipse cx="149.9" cy="54.6" rx="1.7" ry="1.1" fill="#fff" opacity="0.43"/><ellipse cx="145.8" cy="27.7" rx="1.5" ry="0.9" fill="#fff" opacity="0.63"/><ellipse cx="151.4" cy="29.4" rx="1.1" ry="1.0" fill="#fff" opacity="0.79"/><ellipse cx="137.3" cy="2.1" rx="0.8" ry="1.1" fill="#fff" opacity="0.42"/><ellipse cx="100.6" cy="6.5" rx="1.6" ry="1.6" fill="#fff" opacity="0.59"/><ellipse cx="142.3" cy="26.2" rx="1.7" ry="1.0" fill="#fff" opacity="0.69"/><ellipse cx="192.4" cy="41.9" rx="1.6" ry="1.2" fill="#fff" opacity="0.76"/><ellipse cx="107.5" cy="14.2" rx="1.9" ry="1.2" fill="#fff" opacity="0.66"/><ellipse cx="157.1" cy="49.8" rx="1.7" ry="1.4" fill="#fff" opacity="0.78"/><ellipse cx="139.6" cy="51.5" rx="2.1" ry="1.4" fill="#fff" opacity="0.42"/><ellipse cx="194.1" cy="46.0" rx="2.5" ry="1.5" fill="#fff" opacity="0.51"/><ellipse cx="166.4" cy="8.5" rx="1.9" ry="1.5" fill="#fff" opacity="0.48"/><ellipse cx="129.9" cy="4.8" rx="1.2" ry="0.7" fill="#fff" opacity="0.44"/><ellipse cx="204.0" cy="53.3" rx="1.6" ry="1.3" fill="#fff" opacity="0.68"/><ellipse cx="149.6" cy="25.4" rx="2.0" ry="1.1" fill="#fff" opacity="0.51"/><ellipse cx="131.5" cy="37.6" rx="1.9" ry="0.7" fill="#fff" opacity="0.64"/><ellipse cx="189.7" cy="52.3" rx="2.0" ry="0.6" fill="#fff" opacity="0.57"/><ellipse cx="100.1" cy="3.3" rx="1.3" ry="1.0" fill="#fff" opacity="0.70"/><ellipse cx="161.7" cy="16.9" rx="2.1" ry="1.0" fill="#fff" opacity="0.60"/><ellipse cx="120.1" cy="26.5" rx="1.4" ry="1.3" fill="#fff" opacity="0.59"/><ellipse cx="140.9" cy="28.6" rx="1.7" ry="1.2" fill="#fff" opacity="0.69"/><ellipse cx="181.3" cy="24.3" rx="2.2" ry="1.5" fill="#fff" opacity="0.80"/><ellipse cx="172.2" cy="3.9" rx="2.3" ry="1.4" fill="#fff" opacity="0.41"/><ellipse cx="127.4" cy="19.3" rx="2.1" ry="1.1" fill="#fff" opacity="0.51"/><ellipse cx="111.2" cy="10.1" rx="1.0" ry="1.3" fill="#fff" opacity="0.77"/><ellipse cx="115.1" cy="44.7" rx="2.5" ry="0.7" fill="#fff" opacity="0.63"/><ellipse cx="140.1" cy="58.5" rx="2.4" ry="0.5" fill="#fff" opacity="0.48"/><ellipse cx="186.7" cy="34.5" rx="1.7" ry="1.4" fill="#fff" opacity="0.71"/><ellipse cx="198.8" cy="19.6" rx="0.9" ry="1.2" fill="#fff" opacity="0.42"/><ellipse cx="154.4" cy="51.6" rx="1.5" ry="1.1" fill="#fff" opacity="0.47"/><ellipse cx="108.0" cy="36.4" rx="2.4" ry="1.6" fill="#fff" opacity="0.41"/><ellipse cx="195.0" cy="30.7" rx="1.4" ry="0.9" fill="#fff" opacity="0.63"/><ellipse cx="129.6" cy="8.7" rx="2.4" ry="1.2" fill="#fff" opacity="0.64"/><ellipse cx="125.1" cy="86.4" rx="4.7" ry="1.9" fill="#fff" opacity="0.38"/><ellipse cx="144.6" cy="62.0" rx="3.3" ry="2.2" fill="#fff" opacity="0.45"/><ellipse cx="73.6" cy="69.7" rx="1.8" ry="2.6" fill="#fff" opacity="0.42"/><ellipse cx="66.0" cy="113.8" rx="4.9" ry="2.3" fill="#fff" opacity="0.40"/><ellipse cx="82.7" cy="51.0" rx="3.3" ry="1.0" fill="#fff" opacity="0.30"/><ellipse cx="94.8" cy="52.0" rx="3.1" ry="1.8" fill="#fff" opacity="0.46"/><ellipse cx="134.8" cy="91.6" rx="3.2" ry="2.3" fill="#fff" opacity="0.36"/><ellipse cx="100.1" cy="114.8" rx="5.0" ry="2.7" fill="#fff" opacity="0.43"/><ellipse cx="105.4" cy="64.9" rx="2.5" ry="1.0" fill="#fff" opacity="0.44"/><ellipse cx="117.7" cy="105.0" rx="2.9" ry="2.9" fill="#fff" opacity="0.46"/><ellipse cx="60.1" cy="63.6" rx="4.7" ry="1.9" fill="#fff" opacity="0.50"/><ellipse cx="117.2" cy="54.7" rx="3.7" ry="2.5" fill="#fff" opacity="0.32"/><ellipse cx="72.5" cy="71.6" rx="4.9" ry="2.5" fill="#fff" opacity="0.28"/><ellipse cx="95.5" cy="56.6" rx="1.7" ry="2.6" fill="#fff" opacity="0.29"/><ellipse cx="140.5" cy="79.1" rx="2.2" ry="2.4" fill="#fff" opacity="0.28"/><ellipse cx="152.7" cy="57.6" rx="3.0" ry="1.3" fill="#fff" opacity="0.32"/><ellipse cx="199.8" cy="102.2" rx="2.6" ry="2.8" fill="#fff" opacity="0.30"/><ellipse cx="116.8" cy="105.5" rx="3.7" ry="1.1" fill="#fff" opacity="0.50"/><ellipse cx="90.7" cy="66.8" rx="4.2" ry="1.6" fill="#fff" opacity="0.32"/><ellipse cx="70.6" cy="55.9" rx="3.5" ry="1.4" fill="#fff" opacity="0.40"/><ellipse cx="113.5" cy="79.5" rx="4.9" ry="1.9" fill="#fff" opacity="0.39"/><ellipse cx="184.8" cy="61.9" rx="2.0" ry="2.8" fill="#fff" opacity="0.45"/><ellipse cx="95.9" cy="62.3" rx="4.1" ry="2.9" fill="#fff" opacity="0.30"/><ellipse cx="196.8" cy="107.3" rx="3.6" ry="1.8" fill="#fff" opacity="0.28"/><ellipse cx="65.6" cy="112.6" rx="2.3" ry="2.4" fill="#fff" opacity="0.31"/><ellipse cx="178.6" cy="88.8" rx="2.5" ry="1.3" fill="#fff" opacity="0.43"/><ellipse cx="69.9" cy="64.8" rx="3.5" ry="2.7" fill="#fff" opacity="0.40"/><ellipse cx="100.4" cy="109.6" rx="2.2" ry="0.9" fill="#fff" opacity="0.32"/><ellipse cx="124.2" cy="53.9" rx="2.1" ry="1.7" fill="#fff" opacity="0.39"/><ellipse cx="78.9" cy="73.5" rx="4.6" ry="3.0" fill="#fff" opacity="0.41"/><path d="M0 12 Q8 10 14 16 L18 28 L8 32 L0 32 Z" fill="#9a948a"/><path d="M30 24 Q40 22 46 28 L30 30 Z" fill="#6f7478"/><path d="M0 60 L12 62 L60 84 L178 110 L180 115 L160 115 L56 94 L0 72 Z" fill="#2a2f35"/><path d="M0 62 L60 86 L178 111" stroke="#59626a" stroke-width="1.3" fill="none"/><path d="M0 115 L6 100 L8 76 Q12 62 24 58 L40 60 L56 66 L64 74 L62 98 L56 106 L40 104 L24 115 Z" fill="#cf9c70"/><path d="M22 60 L30 78 M34 60 L40 80 M46 63 L50 82" stroke="#a67650" stroke-width="1.2" opacity=".7"/><path d="M10 74 Q20 62 40 62 L58 70 L60 80 L40 74 L20 78 Z" fill="#e0b48c"/></symbol><symbol id="c_fjord" viewBox="0 0 84 76" preserveAspectRatio="none"><rect width="84" height="76" fill="#e9eeee"/><path d="M0 22 L8 10 L16 2 L24 0 H84 V26 H0 Z" fill="#3d4d45"/><path d="M70 10 L84 4 V30 H66 Z" fill="#33472f"/><rect y="25" width="84" height="51" fill="url(#cfw)"/><path d="M62 26 H84 V29 H66 Z" fill="#2a332f"/><path d="M26 64 Q30 62 34 66 L30 72 Q26 72 26 68 Z" fill="#2f6e6e"/><rect x="27.5" y="56" width="6" height="8" rx="2" fill="#e0c33a"/><circle cx="30.5" cy="54.5" r="2" fill="#1e2a2a"/><path d="M33 58 L42 55" stroke="#c8b030" stroke-width="1"/></symbol><symbol id="c_kayak" viewBox="0 0 84 76" preserveAspectRatio="none"><rect width="84" height="36" fill="url(#cks)"/><ellipse cx="18" cy="17" rx="5" ry="1.5" fill="#fff" opacity=".8"/><rect y="35" width="84" height="41" fill="url(#ckw)"/><rect y="34" width="84" height="2.2" fill="#55665f"/><g filter="url(#b2)" opacity=".7"><ellipse cx="10" cy="62" rx="8" ry="6" fill="#b4564d"/><ellipse cx="66" cy="64" rx="12" ry="6" fill="#b56a55"/></g><path d="M14 42 L28 30" stroke="#6b4a1e" stroke-width="1"/><path d="M22 34 L29 28.5 L30 30.5 L24 36 Z" fill="#e0a92d"/><path d="M2 48 Q10 46 18 48 L17 56 Q10 58 3 56 Z" fill="#e2583e"/><path d="M1 46 Q3 38 8 36 H14 Q19 38 21 46 L17 50 H4 Z" fill="#1f2c4e"/><rect x="5" y="37" width="11" height="12" fill="#d2373a"/><circle cx="11" cy="32.5" r="3" fill="#2a2020"/><path d="M50 56 L84 32" stroke="#3a2d20" stroke-width="1"/><path d="M78 34 L84 29 V33 L80 37 Z" fill="#d9a12b"/><path d="M58 50 L60 58 Q72 62 84 62 V54 Q70 54 60 52 Z" fill="#ecd387"/><path d="M60 50 Q64 40 70 37 H78 Q82 42 84 48 L80 54 H64 Z" fill="#cf3a42"/><rect x="69" y="39" width="9" height="13" fill="#c9743a"/><circle cx="72" cy="34" r="3.2" fill="#5a3a30"/><path d="M41 59 Q43 60 44 64 L50 76 H33 L39 64 Q40 60 41 59 Z" fill="#de4c5d"/><circle cx="41.3" cy="60.5" r="1.3" fill="#2b2b2e"/></symbol><symbol id="c_white1" viewBox="0 0 84 76" preserveAspectRatio="none"><rect width="84" height="76" fill="url(#cw1)"/><path d="M0 0 H84 V24 L60 22 L30 26 L0 30 Z" fill="#1c241c"/><path d="M0 12 Q8 8 14 14 L20 26 L8 32 L0 32 Z" fill="#8f8980"/><path d="M30 18 Q40 16 46 22 L34 26 Z" fill="#6f7478"/><g filter="url(#b2)"><ellipse cx="50" cy="44" rx="34" ry="8" fill="#dff0f0" opacity=".8"/><ellipse cx="30" cy="34" rx="30" ry="4" fill="#7cc8d6" opacity=".8"/></g><path d="M0 58 L16 64 L14 72 L0 70 Z" fill="#22272c"/><path d="M12 76 L18 68 Q24 58 34 58 L50 62 L62 68 L66 76 Z" fill="#cf9c70"/><path d="M22 62 Q30 56 40 60 L56 66 L50 70 L30 66 Z" fill="#e3b88f"/></symbol><symbol id="c_fall" viewBox="0 0 84 76" preserveAspectRatio="none"><rect width="84" height="76" fill="url(#cfa)"/><path d="M36 0 H66 L56 14 L44 10 Z" fill="#f2f5f5"/><path d="M0 0 H30 L40 10 L30 30 L10 40 L0 30 Z" fill="#30582c"/><path d="M56 14 L66 0 H84 V76 H62 L54 40 Z" fill="#244422"/><g filter="url(#b2)"><ellipse cx="14" cy="40" rx="8" ry="20" fill="#6f7f6a" opacity=".8"/><ellipse cx="66" cy="40" rx="6" ry="26" fill="#4f7a3a" opacity=".8"/></g><path d="M38 20 L42 18 L40 76 H30 Z" fill="#e9f1f1" opacity=".95"/><path d="M41 20 L44 22 L46 76 H40 Z" fill="#c3d6d6" opacity=".8"/><path d="M6 22 L8 21 L8 34 L6 34 Z" fill="#dfe9e9" opacity=".8"/></symbol><symbol id="c_white2" viewBox="0 0 84 76" preserveAspectRatio="none"><rect width="84" height="76" fill="url(#cw2)"/><path d="M10 0 H84 V14 L50 16 L30 8 Z" fill="#a08a6f"/><path d="M60 10 L84 6 V20 L66 18 Z" fill="#4a423d"/><g filter="url(#b2)"><ellipse cx="50" cy="34" rx="30" ry="12" fill="#eef6f6" opacity=".9"/><ellipse cx="60" cy="58" rx="20" ry="10" fill="#dff0f0" opacity=".8"/></g><path d="M0 0 H10 L14 12 L0 14 Z" fill="#1e2632"/><path d="M0 12 L14 12 L58 76 L46 76 L0 24 Z" fill="#232a36"/><path d="M6 76 L14 60 Q20 50 30 50 L40 56 L42 66 L36 76 Z" fill="#cf9c70"/><path d="M28 76 L36 62 L44 60 L56 76 Z" fill="#4fc455"/></symbol><symbol id="c_lake" viewBox="0 0 84 76" preserveAspectRatio="none"><rect width="84" height="76" fill="url(#cla)"/><path d="M0 0 H84 V34 H0 Z" fill="#2f4a2c"/><path d="M0 4 L10 0 H50 L40 22 L0 33 Z" fill="#4a6048"/><path d="M56 0 H84 V33 L62 30 Z" fill="#263f22"/><path d="M0 0 H8 L0 5 Z" fill="#e9eeee"/><path d="M45 3 L48 3 L48.5 33 L44 33 Z" fill="#dfe9e9" opacity=".85"/><rect y="32" width="84" height="2.5" fill="#1f3230"/><g filter="url(#b1)" opacity=".7"><ellipse cx="14" cy="46" rx="12" ry="2.5" fill="#7f9ca2"/><ellipse cx="50" cy="44" rx="14" ry="2.5" fill="#6f8c92"/><ellipse cx="30" cy="54" rx="14" ry="3" fill="#86a2a8"/><ellipse cx="66" cy="56" rx="12" ry="3" fill="#7f9ca2"/><ellipse cx="16" cy="64" rx="12" ry="3.5" fill="#8fa8ae"/><ellipse cx="48" cy="68" rx="16" ry="4" fill="#9ab2b6"/><ellipse cx="74" cy="70" rx="9" ry="3" fill="#7f9ca2"/><ellipse cx="34" cy="40" rx="30" ry="2" fill="#23393f"/><ellipse cx="40" cy="50" rx="34" ry="2" fill="#23393f"/><ellipse cx="40" cy="60" rx="36" ry="2.4" fill="#23393f"/></g><path d="M4 33 L10 31 L12 35 L5 37 Z" fill="#e6c72a"/><path d="M66 32 L72 28 L76 36 L69 38 Z" fill="#e6c72a"/></symbol><symbol id="c_falls3" viewBox="0 0 84 76" preserveAspectRatio="none"><rect width="84" height="76" fill="url(#cf3)"/><g filter="url(#b2)"><ellipse cx="14" cy="14" rx="16" ry="16" fill="#3f6a2a" opacity=".9"/><ellipse cx="30" cy="34" rx="10" ry="14" fill="#1c2a2a" opacity=".9"/><ellipse cx="8" cy="40" rx="10" ry="8" fill="#3a6428" opacity=".9"/><ellipse cx="78" cy="20" rx="8" ry="20" fill="#35602a" opacity=".8"/></g><path d="M52 0 L60 0 L67 50 L43 50 Z" fill="#eef4f4" opacity=".9"/><path d="M47 20 L52 0 L54 0 L52 50 L43 50 Z" fill="#cfdede" opacity=".55"/><path d="M70 16 L73 16 L76 50 L70 50 Z" fill="#dfe9e9" opacity=".7"/><g filter="url(#b1)"><ellipse cx="55" cy="50" rx="16" ry="2.5" fill="#9fb4b4" opacity=".6"/><ellipse cx="55" cy="60" rx="8" ry="8" fill="#3f5a5e" opacity=".5"/></g><circle cx="3.5" cy="51" r="3" fill="#f0d83a"/><ellipse cx="14" cy="54" rx="3" ry="1.6" fill="#f0d22a"/><path d="M22 52 L36 51.5 L36 54 L22 54.5 Z" fill="#e6c72a"/><ellipse cx="4" cy="60" rx="4" ry="4" fill="#5f7a2a" opacity=".5"/></symbol></svg>
<div class="a" style="left:0;top:0;width:3840px;height:1400px;background:linear-gradient(to bottom,#ffffff 0px,#ffffff 738px,#f8fafb 741px,#f3f7f8 800px,#e9f0f3 870px,#dde9ee 940px,#d0e1e8 1000px,#cbdee6 1030px,#d3e3ea 1065px,#d9e6ec 1100px,#c9dde5 1128px,#9cc3d0 1146px,#6ba4b8 1165px,#4690a8 1199px,#3f8aa4 1235px,#37839e 1265px,#2f7c98 1295px,#297590 1325px,#226d8a 1360px,#1a627f 1400px)"></div><div class="a" style="left:2950px;top:0;width:890px;height:1400px;background:linear-gradient(to bottom,#ffffff 0px,#ffffff 738px,#f9fbfc 741px,#f4f8f9 800px,#ebf2f5 870px,#dfe9ee 940px,#d3e2e9 1000px,#cddee6 1050px,#c3d7e1 1110px,#b9d0dc 1150px,#a6c6d5 1188px,#a9c8d6 1204px,#6ba3be 1222px,#5a98b5 1248px,#8db6c9 1266px,#b1cdda 1285px,#a9c8d6 1310px,#7fb0c5 1332px,#5f9cb8 1352px,#4a8dab 1380px,#3f84a3 1400px);-webkit-mask-image:linear-gradient(to right,transparent 0,#000 200px);mask-image:linear-gradient(to right,transparent 0,#000 200px)"></div><div class="a" style="left:1000px;top:0;width:460px;height:1400px;background:linear-gradient(to bottom,rgba(255,255,255,0) 0px,rgba(255,255,255,0) 900px,rgba(228,236,240,.9) 1000px,#e4ecf0 1035px,#dde8ed 1072px,#b5d0db 1098px,#8cb9c8 1117px,#6ea5ba 1140px,#5a9bb4 1162px,#4389a6 1190px,#37829f 1214px,#2d7b99 1240px,#27759299 1275px,rgba(39,117,146,0) 1320px);-webkit-mask-image:linear-gradient(to right,transparent 0,#000 150px,#000 330px,transparent 460px);mask-image:linear-gradient(to right,transparent 0,#000 150px,#000 330px,transparent 460px)"></div><svg class="a" style="left:0;top:740px" width="3840" height="660" viewBox="0 740 3840 660"><defs><filter id="bl" x="-10%" y="-50%" width="120%" height="200%"><feGaussianBlur stdDeviation="34 8"/></filter></defs><g filter="url(#bl)"><ellipse cx="150" cy="1008" rx="480" ry="26" fill="#a9ccd8" opacity="0.7"/><ellipse cx="150" cy="1106" rx="420" ry="15" fill="#f1f5f7" opacity="0.95"/><ellipse cx="300" cy="880" rx="600" ry="20" fill="#f6f9fa" opacity="0.5"/><ellipse cx="150" cy="1296" rx="640" ry="46" fill="#62a2b7" opacity="0.8" transform="rotate(-3 150 1296)"/><ellipse cx="560" cy="1250" rx="260" ry="20" fill="#5a9db3" opacity="0.5"/><ellipse cx="80" cy="1210" rx="300" ry="22" fill="#3a859f" opacity="0.5"/><ellipse cx="1000" cy="1350" rx="500" ry="16" fill="#3f819c" opacity="0.3"/><ellipse cx="1700" cy="1318" rx="420" ry="10" fill="#5b9ab2" opacity="0.4"/><ellipse cx="2350" cy="1322" rx="420" ry="9" fill="#a6cad8" opacity="0.8"/><ellipse cx="2900" cy="1338" rx="420" ry="9" fill="#b9d5e0" opacity="0.8"/><ellipse cx="2250" cy="1358" rx="330" ry="8" fill="#86b7ca" opacity="0.7"/><ellipse cx="3050" cy="1392" rx="420" ry="12" fill="#0f5473" opacity="0.4"/><ellipse cx="2300" cy="1392" rx="900" ry="18" fill="#2f7997" opacity="0.55"/><ellipse cx="2000" cy="1335" rx="700" ry="16" fill="#6aa6bd" opacity="0.45"/><ellipse cx="1500" cy="1388" rx="600" ry="14" fill="#125877" opacity="0.4"/><ellipse cx="3320" cy="1208" rx="240" ry="6" fill="#f0f5f8" opacity="0.95" transform="rotate(3 3320 1208)"/><ellipse cx="3620" cy="1222" rx="200" ry="6" fill="#dbe8ee" opacity="0.8" transform="rotate(1 3620 1222)"/><ellipse cx="3800" cy="1235" rx="160" ry="26" fill="#a9c8d8" opacity="0.8"/><ellipse cx="3700" cy="1045" rx="220" ry="9" fill="#eaf2f5" opacity="0.7"/><ellipse cx="3350" cy="960" rx="300" ry="8" fill="#eef4f7" opacity="0.6"/><ellipse cx="3560" cy="1282" rx="260" ry="8" fill="#e3edf2" opacity="0.85" transform="rotate(2 3560 1282)"/><ellipse cx="3400" cy="1312" rx="260" ry="7" fill="#dce8ee" opacity="0.8" transform="rotate(3 3400 1312)"/><ellipse cx="3790" cy="1370" rx="120" ry="30" fill="#8fbace" opacity="0.7"/><ellipse cx="3250" cy="1345" rx="120" ry="18" fill="#5f9cb8" opacity="0.6"/></g></svg>
<div class="a" style="left:1321.00px;top:44.80px;width:1790.00px;height:1177.20px;background:#2e2e2e;border-radius:44px 44px 0 0"></div>
<div class="a" style="left:1207.00px;top:1220.40px;width:2009.50px;height:65.40px;background:#2e2e2e;border-radius:0 0 36px 36px"></div>
<div class="a" style="left:1350.5px;top:76.8px;width:1727.5px;height:1110.5px;background:#000;border-radius:17px 17px 16px 16px;overflow:hidden">
<div class="a" style="left:-1350.5px;top:-76.8px;width:3840px;height:1400px">
<div class="a" style="left:1350.50px;top:76.80px;width:1727.50px;height:41.80px;background:#1d1d1d;"></div>
<div class="a" style="left:1365.80px;top:87.70px;width:15.00px;height:15.00px;background:#5c5c5c;border-radius:50%"></div>
<div class="a" style="left:1390.40px;top:87.70px;width:15.00px;height:15.00px;background:#5c5c5c;border-radius:50%"></div>
<div class="a" style="left:1415.20px;top:87.70px;width:15.00px;height:15.00px;background:#5c5c5c;border-radius:50%"></div>
<svg style="left:1487.00px;top:85.60px;" width="22.60" height="19.80" viewBox="0 0 24 21" preserveAspectRatio="none"><path d="M12 0 L24 10.8 L22.6 12.4 L20.6 10.8 V21 H14.4 V14 H9.6 V21 H3.4 V10.8 L1.4 12.4 L0 10.8 Z" fill="#cfcfcf"/></svg>
<div class="t" style="left:1547.60px;top:85.00px;font-size:17px;line-height:22px;color:#cfcfcf;transform:scaleX(0.9901);">Import</div>
<div class="t" style="left:1627.30px;top:85.00px;font-size:17px;line-height:22px;color:#f2f2f2;transform:scaleX(0.8841);">Edit</div>
<div class="a" style="left:1626.30px;top:105.80px;width:27.40px;height:3.00px;background:#e6e6e6;"></div>
<div class="t" style="left:1683.60px;top:85.00px;font-size:17px;line-height:22px;color:#cfcfcf;transform:scaleX(0.9423);">Export</div>
<div class="t" style="left:2361.70px;top:85.40px;font-size:17px;line-height:22px;color:#dcdcdc;transform:scaleX(0.8705);">Kayak Scene</div>
<div class="a" style="left:1871.00px;top:116.60px;width:1207.00px;height:4.00px;background:#000;"></div>
<div class="a" style="left:1350.50px;top:120.30px;width:520.50px;height:1051.70px;background:#1f1f1f;"></div>
<svg style="left:1376.90px;top:160.30px;" width="19.90" height="14.80" viewBox="0 0 20 15" preserveAspectRatio="none"><path d="M0 0.4 H6.6 V1.6 H0 Z" fill="#a9a9a9"/><path d="M0 2.6 H20 V15 H0 Z" fill="#d2d2d2"/><path d="M6.3 5 L9.4 8.2 H7.4 V11 H14 V12.6 H5.2 V8.2 H3.2 Z" fill="#1f1f1f"/></svg>
<div class="t" style="left:1409.10px;top:159.50px;font-size:14.5px;line-height:19px;color:#d6d6d6;transform:scaleX(0.9256);">Kayak Scene.prproj\Lifestyle Footage\New Zealand Shoot</div>
<div class="a" style="left:1373.00px;top:193.00px;width:245.30px;height:28.30px;background:#0d0d0d;border-radius:5px;border:1px solid #2d2d2d"></div>
<svg style="left:1381.50px;top:198.00px;" width="20.00" height="20.00" viewBox="0 0 20 20" preserveAspectRatio="none"><circle cx="7.4" cy="7.4" r="5.3" fill="none" stroke="#dadada" stroke-width="1.5"/><path d="M11.3 11.3 L17.6 17.4" stroke="#dadada" stroke-width="1.7" stroke-linecap="round"/></svg>
<svg style="left:1634.80px;top:199.80px;" width="18.10" height="14.20" viewBox="0 0 18 14" preserveAspectRatio="none"><path d="M0 0.3 H6 V1.4 H0 Z" fill="#9d9d9d"/><path d="M0 2.4 H18 V14 H0 Z" fill="#c9c9c9"/><circle cx="10.3" cy="7" r="2.5" fill="none" stroke="#1f1f1f" stroke-width="1.3"/><path d="M8.4 9 L5.6 11.8" stroke="#1f1f1f" stroke-width="1.5"/></svg>
<div class="t" style="left:1788.90px;top:199.50px;font-size:14px;line-height:18px;color:#d0d0d0;transform:scaleX(0.9639);">10 items</div>
<div class="a" style="left:1372.60px;top:232.50px;width:476.80px;height:887.30px;background:#1e1e1e;border-radius:6px;border:1.5px solid #161616"></div>
<svg style="left:1386px;top:245.4px" width="204.2" height="115.2" viewBox="0 0 204 115" preserveAspectRatio="none"><use href="#p1"/></svg>
<svg style="left:1568.90px;top:343.40px;" width="20.40" height="16.20" viewBox="0 0 20 16" preserveAspectRatio="none"><rect x="0" y="0" width="20" height="16" fill="#3b3b3b" opacity=".9"/><rect x="1.2" y="1.2" width="17.6" height="13.6" fill="none" stroke="#bdbdbd" stroke-width="1.2"/><path d="M3 8 H17" stroke="#d5d5d5" stroke-width="1"/><path d="M5.2 8 L6.4 4.2 L7.6 8 L6.4 11.8 Z M9 8 L10.2 3.6 L11.4 8 L10.2 12.4 Z M12.8 8 L14 4.6 L15.2 8 L14 11.4 Z" fill="#e0e0e0"/></svg>
<div class="t" style="left:1386.00px;top:370.90px;font-size:13.1px;line-height:17px;color:#c6c6c6;transform:scaleX(0.9792);">A001_C024_05026M.RDC...</div>
<div class="t" style="left:1563.00px;top:370.90px;font-size:13.1px;line-height:17px;color:#c6c6c6;transform:scaleX(0.9491);">1:07</div>
<svg style="left:1612.7px;top:245.4px" width="204" height="115.2" viewBox="0 0 204 115" preserveAspectRatio="none"><use href="#p2"/></svg>
<svg style="left:1795.40px;top:343.40px;" width="20.40" height="16.20" viewBox="0 0 20 16" preserveAspectRatio="none"><rect x="0" y="0" width="20" height="16" fill="#3b3b3b" opacity=".9"/><rect x="1.2" y="1.2" width="17.6" height="13.6" fill="none" stroke="#bdbdbd" stroke-width="1.2"/><path d="M3 8 H17" stroke="#d5d5d5" stroke-width="1"/><path d="M5.2 8 L6.4 4.2 L7.6 8 L6.4 11.8 Z M9 8 L10.2 3.6 L11.4 8 L10.2 12.4 Z M12.8 8 L14 4.6 L15.2 8 L14 11.4 Z" fill="#e0e0e0"/></svg>
<div class="t" style="left:1612.70px;top:370.90px;font-size:13.1px;line-height:17px;color:#c6c6c6;transform:scaleX(0.9792);">A001_C024_05026M.RDC...</div>
<div class="t" style="left:1789.70px;top:370.90px;font-size:13.1px;line-height:17px;color:#c6c6c6;transform:scaleX(0.9491);">2:13</div>
<svg style="left:1384.2px;top:412px" width="204.2" height="114.4" viewBox="0 0 204 115" preserveAspectRatio="none"><use href="#p3"/></svg>
<div class="t" style="left:1386.00px;top:537.50px;font-size:13.1px;line-height:17px;color:#c6c6c6;transform:scaleX(0.9792);">A001_C024_05026M.RDC...</div>
<div class="t" style="left:1563.00px;top:537.50px;font-size:13.1px;line-height:17px;color:#c6c6c6;transform:scaleX(0.9491);">2:08</div>
<svg style="left:1612.7px;top:411.3px" width="204" height="115" viewBox="0 0 204 115" preserveAspectRatio="none"><use href="#p4"/></svg>
<svg style="left:1795.40px;top:509.10px;" width="20.40" height="16.20" viewBox="0 0 20 16" preserveAspectRatio="none"><rect x="0" y="0" width="20" height="16" fill="#3b3b3b" opacity=".9"/><rect x="1.2" y="1.2" width="17.6" height="13.6" fill="none" stroke="#bdbdbd" stroke-width="1.2"/><path d="M3 8 H17" stroke="#d5d5d5" stroke-width="1"/><path d="M5.2 8 L6.4 4.2 L7.6 8 L6.4 11.8 Z M9 8 L10.2 3.6 L11.4 8 L10.2 12.4 Z M12.8 8 L14 4.6 L15.2 8 L14 11.4 Z" fill="#e0e0e0"/></svg>
<div class="t" style="left:1612.70px;top:537.50px;font-size:13.1px;line-height:17px;color:#c6c6c6;transform:scaleX(0.9792);">A001_C024_05026M.RDC...</div>
<div class="t" style="left:1789.70px;top:537.50px;font-size:13.1px;line-height:17px;color:#c6c6c6;transform:scaleX(0.9491);">1:22</div>
<svg style="left:1384.2px;top:578.1px" width="204.2" height="114.9" viewBox="0 0 204 115" preserveAspectRatio="none"><use href="#p5"/></svg>
<svg style="left:1567.10px;top:675.80px;" width="20.40" height="16.20" viewBox="0 0 20 16" preserveAspectRatio="none"><rect x="0" y="0" width="20" height="16" fill="#3b3b3b" opacity=".9"/><rect x="1.2" y="1.2" width="17.6" height="13.6" fill="none" stroke="#bdbdbd" stroke-width="1.2"/><path d="M3 8 H17" stroke="#d5d5d5" stroke-width="1"/><path d="M5.2 8 L6.4 4.2 L7.6 8 L6.4 11.8 Z M9 8 L10.2 3.6 L11.4 8 L10.2 12.4 Z M12.8 8 L14 4.6 L15.2 8 L14 11.4 Z" fill="#e0e0e0"/></svg>
<div class="t" style="left:1386.00px;top:704.30px;font-size:13.1px;line-height:17px;color:#c6c6c6;transform:scaleX(0.9792);">A001_C024_05026M.RDC...</div>
<div class="t" style="left:1563.00px;top:704.30px;font-size:13.1px;line-height:17px;color:#c6c6c6;transform:scaleX(0.9491);">1:19</div>
<svg style="left:1611.6px;top:578.1px" width="204.2" height="116.6" viewBox="0 0 204 115" preserveAspectRatio="none"><use href="#p6"/></svg>
<svg style="left:1794.50px;top:677.50px;" width="20.40" height="16.20" viewBox="0 0 20 16" preserveAspectRatio="none"><rect x="0" y="0" width="20" height="16" fill="#3b3b3b" opacity=".9"/><rect x="1.2" y="1.2" width="17.6" height="13.6" fill="none" stroke="#bdbdbd" stroke-width="1.2"/><path d="M3 8 H17" stroke="#d5d5d5" stroke-width="1"/><path d="M5.2 8 L6.4 4.2 L7.6 8 L6.4 11.8 Z M9 8 L10.2 3.6 L11.4 8 L10.2 12.4 Z M12.8 8 L14 4.6 L15.2 8 L14 11.4 Z" fill="#e0e0e0"/></svg>
<div class="t" style="left:1612.70px;top:704.30px;font-size:13.1px;line-height:17px;color:#c6c6c6;transform:scaleX(0.9792);">A001_C024_05026M.RDC...</div>
<div class="t" style="left:1789.70px;top:704.30px;font-size:13.1px;line-height:17px;color:#c6c6c6;transform:scaleX(0.9491);">2:10</div>
<svg style="left:1384.2px;top:745px" width="204.4" height="115" viewBox="0 0 204 115" preserveAspectRatio="none"><use href="#p7"/></svg>
<svg style="left:1567.30px;top:842.80px;" width="20.40" height="16.20" viewBox="0 0 20 16" preserveAspectRatio="none"><rect x="0" y="0" width="20" height="16" fill="#3b3b3b" opacity=".9"/><rect x="1.2" y="1.2" width="17.6" height="13.6" fill="none" stroke="#bdbdbd" stroke-width="1.2"/><path d="M3 8 H17" stroke="#d5d5d5" stroke-width="1"/><path d="M5.2 8 L6.4 4.2 L7.6 8 L6.4 11.8 Z M9 8 L10.2 3.6 L11.4 8 L10.2 12.4 Z M12.8 8 L14 4.6 L15.2 8 L14 11.4 Z" fill="#e0e0e0"/></svg>
<div class="t" style="left:1386.00px;top:871.00px;font-size:13.1px;line-height:17px;color:#c6c6c6;transform:scaleX(0.9792);">A001_C024_05026M.RDC...</div>
<div class="t" style="left:1563.00px;top:871.00px;font-size:13.1px;line-height:17px;color:#c6c6c6;transform:scaleX(0.9491);">7:15</div>
<svg style="left:1610.9px;top:745px" width="204.6" height="115" viewBox="0 0 204 115" preserveAspectRatio="none"><use href="#p8"/></svg>
<svg style="left:1794.20px;top:842.80px;" width="20.40" height="16.20" viewBox="0 0 20 16" preserveAspectRatio="none"><rect x="0" y="0" width="20" height="16" fill="#3b3b3b" opacity=".9"/><rect x="1.2" y="1.2" width="17.6" height="13.6" fill="none" stroke="#bdbdbd" stroke-width="1.2"/><path d="M3 8 H17" stroke="#d5d5d5" stroke-width="1"/><path d="M5.2 8 L6.4 4.2 L7.6 8 L6.4 11.8 Z M9 8 L10.2 3.6 L11.4 8 L10.2 12.4 Z M12.8 8 L14 4.6 L15.2 8 L14 11.4 Z" fill="#e0e0e0"/></svg>
<div class="t" style="left:1612.70px;top:871.00px;font-size:13.1px;line-height:17px;color:#c6c6c6;transform:scaleX(0.9792);">A001_C024_05026M.RDC...</div>
<div class="t" style="left:1789.70px;top:871.00px;font-size:13.1px;line-height:17px;color:#c6c6c6;transform:scaleX(0.9491);">4:02</div>
<svg style="left:1384.6px;top:912.4px" width="203.9" height="114.5" viewBox="0 0 204 115" preserveAspectRatio="none"><use href="#p7"/></svg>
<svg style="left:1567.20px;top:1009.70px;" width="20.40" height="16.20" viewBox="0 0 20 16" preserveAspectRatio="none"><rect x="0" y="0" width="20" height="16" fill="#3b3b3b" opacity=".9"/><rect x="1.2" y="1.2" width="17.6" height="13.6" fill="none" stroke="#bdbdbd" stroke-width="1.2"/><path d="M3 8 H17" stroke="#d5d5d5" stroke-width="1"/><path d="M5.2 8 L6.4 4.2 L7.6 8 L6.4 11.8 Z M9 8 L10.2 3.6 L11.4 8 L10.2 12.4 Z M12.8 8 L14 4.6 L15.2 8 L14 11.4 Z" fill="#e0e0e0"/></svg>
<div class="t" style="left:1386.00px;top:1037.80px;font-size:13.1px;line-height:17px;color:#c6c6c6;transform:scaleX(0.9792);">A001_C024_05026M.RDC...</div>
<div class="t" style="left:1563.00px;top:1037.80px;font-size:13.1px;line-height:17px;color:#c6c6c6;transform:scaleX(0.9491);">2:16</div>
<svg style="left:1610.9px;top:912.4px" width="205.4" height="114.5" viewBox="0 0 204 115" preserveAspectRatio="none"><use href="#p10"/></svg>
<svg style="left:1795.00px;top:1009.70px;" width="20.40" height="16.20" viewBox="0 0 20 16" preserveAspectRatio="none"><rect x="0" y="0" width="20" height="16" fill="#3b3b3b" opacity=".9"/><rect x="1.2" y="1.2" width="17.6" height="13.6" fill="none" stroke="#bdbdbd" stroke-width="1.2"/><path d="M3 8 H17" stroke="#d5d5d5" stroke-width="1"/><path d="M5.2 8 L6.4 4.2 L7.6 8 L6.4 11.8 Z M9 8 L10.2 3.6 L11.4 8 L10.2 12.4 Z M12.8 8 L14 4.6 L15.2 8 L14 11.4 Z" fill="#e0e0e0"/></svg>
<div class="t" style="left:1612.70px;top:1037.80px;font-size:13.1px;line-height:17px;color:#c6c6c6;transform:scaleX(0.9792);">A001_C024_05026M.RDC...</div>
<div class="t" style="left:1789.70px;top:1037.80px;font-size:13.1px;line-height:17px;color:#c6c6c6;transform:scaleX(0.9491);">3:15</div>
<svg style="left:1377.20px;top:1137.60px;" width="18.60" height="17.80" viewBox="0 0 18.6 17.8" preserveAspectRatio="none"><path d="M13.4 0.4 L18 4.6 L6.6 14.2 L2.4 10 Z" fill="#33c48d"/><path d="M1.9 11 L5.6 14.8 L0.5 17.2 Z" fill="none" stroke="#33c48d" stroke-width="1.3" stroke-linejoin="round"/><path d="M0.6 17.1 L1.6 14.4 L3.2 16 Z" fill="#33c48d"/></svg>
<svg style="left:1415.90px;top:1139.40px;" width="21.00" height="12.80" viewBox="0 0 21 12.8" preserveAspectRatio="none"><rect x="0" y="0" width="6.8" height="5.4" fill="#bdbdbd"/><rect x="0" y="7.3" width="6.8" height="5.4" fill="#bdbdbd"/><rect x="9.3" y="2.4" width="11.7" height="1.5" fill="#bdbdbd"/><rect x="9.3" y="10.2" width="11.7" height="1.5" fill="#bdbdbd"/></svg>
<div class="a" style="left:1451px;top:1131.1px;width:30.1px;height:29.7px;background:#505050;border-radius:5px"></div>
<svg style="left:1459.50px;top:1140.00px;" width="12.70" height="11.80" viewBox="0 0 12.7 11.8" preserveAspectRatio="none"><rect x="0" y="0" width="12.7" height="7.8" fill="#e4e4e4"/><rect x="0" y="10.1" width="12.7" height="1.5" fill="#e4e4e4"/></svg>
<svg style="left:1494.10px;top:1139.40px;" width="23.00" height="12.80" viewBox="0 0 23 12.8" preserveAspectRatio="none"><rect x="0" y="0" width="11.6" height="6.6" fill="#bdbdbd"/><rect x="4.6" y="2.5" width="12.6" height="7.6" fill="#bdbdbd" stroke="#1f1f1f" stroke-width="1.2"/><rect x="9.6" y="5.2" width="13.2" height="7.6" fill="#bdbdbd" stroke="#1f1f1f" stroke-width="1.2"/></svg>
<div class="a" style="left:1537.8px;top:1144.9px;width:12.2px;height:1.9px;background:#4f4f4f"></div>
<div class="a" style="left:1572.3px;top:1144.9px;width:59px;height:1.9px;background:#4f4f4f"></div>
<div class="a" style="left:1554.7px;top:1139.5px;width:12.6px;height:12.6px;border:2.4px solid #d8d8d8;border-radius:50%"></div>
<svg style="left:1655.60px;top:1139.00px;" width="15.80" height="13.60" viewBox="0 0 15.8 13.6" preserveAspectRatio="none"><rect x="0" y="0" width="15.8" height="2.3" fill="#bdbdbd"/><rect x="0" y="5.4" width="14.2" height="2.4" fill="#bdbdbd"/><rect x="0" y="11" width="11.3" height="2.5" fill="#bdbdbd"/></svg>
<svg style="left:1706.60px;top:1141.00px;" width="19.00" height="10.20" viewBox="0 0 19 10.2" preserveAspectRatio="none"><rect x="0" y="0" width="5.6" height="10" fill="#6e6e6e"/><rect x="7" y="1" width="4.6" height="9" fill="#6e6e6e"/><rect x="12.6" y="2" width="3.2" height="8" fill="#6e6e6e"/><rect x="17" y="3" width="1.6" height="7" fill="#6e6e6e"/></svg>
<svg style="left:1747.00px;top:1138.80px;" width="17.10" height="12.80" viewBox="0 0 17.1 12.8" preserveAspectRatio="none"><path d="M0 0.2 H6.2 L7.4 1.5 H0 Z" fill="#a6a6a6"/><rect x="0" y="2.4" width="17.1" height="10.4" fill="#a6a6a6"/></svg>
<svg style="left:1789.10px;top:1138.80px;" width="12.70" height="12.80" viewBox="0 0 12.7 12.8" preserveAspectRatio="none"><path d="M0 0 H12.7 V12.8 H5.6 V7.2 H0 Z" fill="#bdbdbd"/><path d="M0.6 8.2 H4.6 V12.2 Z" fill="#bdbdbd"/></svg>
<svg style="left:1828.50px;top:1138.00px;" width="12.00" height="15.00" viewBox="0 0 12 15" preserveAspectRatio="none"><path d="M4 0.8 H8 V2.2 H12 V3.6 H0 V2.2 H4 Z" fill="#5e5e5e"/><path d="M1.2 4.6 H10.8 V14.2 H1.2 Z" fill="none" stroke="#5e5e5e" stroke-width="1.4"/><path d="M4.1 6 V13 M6 6 V13 M7.9 6 V13" stroke="#5e5e5e" stroke-width="1"/></svg>
<svg style="left:2262.3px;top:119.6px" width="425.6" height="757.6" viewBox="0 0 426 758" preserveAspectRatio="none"><use href="#kayak"/></svg>
<div class="a" style="left:1876.00px;top:877.40px;width:58.00px;height:294.60px;background:#1f1f1f;"></div>
<div class="a" style="left:1890.70px;top:897.90px;width:29.80px;height:29.30px;background:#1473e6;border-radius:5px"></div>
<svg style="left:1897.50px;top:902.30px;" width="17.00" height="21.00" viewBox="0 0 17 21" preserveAspectRatio="none"><path d="M1 0.5 L16.2 11.6 L9.2 12.7 L5.6 20 Z" fill="#fff"/></svg>
<svg style="left:1893.00px;top:944.20px;" width="26.00" height="22.00" viewBox="0 0 26 22" preserveAspectRatio="none"><rect x="1" y="1.4" width="12.6" height="11.6" fill="none" stroke="#c4c4c4" stroke-width="1.7" stroke-dasharray="3.2 2.1"/><path d="M8.5 5.4 H15.4 V2 L21.8 7.2 L15.4 12.4 V9 H8.5 Z" fill="#c4c4c4"/><path d="M25 17.2 V21.2 H21 Z" fill="#c4c4c4"/></svg>
<svg style="left:1893.00px;top:981.00px;" width="26.00" height="21.00" viewBox="0 0 26 21" preserveAspectRatio="none"><path d="M11.6 0.6 H13.6 V17.4 H11.6 Z" fill="#c4c4c4"/><path d="M0.4 9 L7 4.2 V7.6 H10.4 V10.4 H7 V13.8 Z" fill="#c4c4c4"/><path d="M24.8 9 L18.2 4.2 V7.6 H14.8 V10.4 H18.2 V13.8 Z" fill="#c4c4c4"/><path d="M25 15.6 V19.6 H21 Z" fill="#c4c4c4"/></svg>
<svg style="left:1896.00px;top:1021.50px;" width="19.00" height="20.00" viewBox="0 0 19 20" preserveAspectRatio="none"><path d="M6.2 0.8 L18.4 11.6 L12.4 19 L0.4 8.2 Z" fill="#c4c4c4"/><path d="M5.6 6.4 L7.4 6.2 L8 8.2 L9.8 8 L10.4 10 L12.2 9.8 L12.8 11.8 L13.6 12.6 L12.6 13.8 L11.4 13.2 L10.8 11.6 L9 11.8 L8.4 9.8 L6.6 10 L6 8 L5 7.6 Z" fill="#1f1f1f"/></svg>
<svg style="left:1893.20px;top:1060.50px;" width="24.60" height="20.00" viewBox="0 0 24.6 20" preserveAspectRatio="none"><rect x="0" y="0" width="1.8" height="17" fill="#c4c4c4"/><rect x="21.2" y="0" width="1.8" height="17" fill="#c4c4c4"/><path d="M3.2 8.5 L8.4 4.4 V7.4 H14.6 V4.4 L19.8 8.5 L14.6 12.6 V9.6 H8.4 V12.6 Z" fill="#c4c4c4"/><path d="M24.4 15.4 V19.4 H20.4 Z" fill="#c4c4c4"/></svg>
<svg style="left:1896.00px;top:1100.50px;" width="19.00" height="20.00" viewBox="0 0 19 20" preserveAspectRatio="none"><path d="M12.6 0.4 L18.4 5.4 L15.4 8.6 L9.8 3.6 Z" fill="#c4c4c4"/><path d="M8.8 4.8 L14.4 9.6 L11.4 15.6 L0.6 19.6 L7.2 12.4 A1.7 1.7 0 1 0 5.8 11.2 L0.2 18.6 L3 8.2 Z" fill="#c4c4c4"/></svg>
<svg style="left:1895.20px;top:1139.80px;" width="25.00" height="22.00" viewBox="0 0 25 22" preserveAspectRatio="none"><rect x="1" y="1" width="19.4" height="16.4" fill="#454545" stroke="#c4c4c4" stroke-width="1.4"/><path d="M24.6 17.6 V21.6 H20.6 Z" fill="#c4c4c4"/></svg>
<div class="a" style="left:1940.00px;top:877.40px;width:1138.00px;height:294.60px;background:#1f1f1f;"></div>
<svg style="left:1953.60px;top:890.90px;" width="7.60" height="7.20" viewBox="0 0 7.6 7.2" preserveAspectRatio="none"><path d="M0.6 0.5 L7 6.7 M7 0.5 L0.6 6.7" stroke="#c8c8c8" stroke-width="1.3"/></svg>
<div class="a" style="left:1971.80px;top:884.80px;width:13.10px;height:13.10px;background:#485200;"></div>
<div class="t" style="left:1998.70px;top:883.90px;font-size:14.5px;line-height:19px;color:#e2e2e2;transform:scaleX(0.8875);">Kayak Sequence</div>
<div class="a" style="left:2108.90px;top:889.00px;width:10.40px;height:1.30px;background:#bdbdbd;"></div>
<div class="a" style="left:2108.90px;top:892.90px;width:10.40px;height:1.30px;background:#bdbdbd;"></div>
<div class="a" style="left:2108.90px;top:896.80px;width:10.40px;height:1.30px;background:#bdbdbd;"></div>
<div class="t" style="left:1962.90px;top:914.40px;font-size:17.2px;line-height:22px;color:#4294e9;font-weight:700;-webkit-text-stroke:0;">00:02:14:23</div>
<div class="a" style="left:1956.20px;top:942.40px;width:29.60px;height:29.50px;background:#4c4c4c;border-radius:5px"></div>
<div class="a" style="left:1995.90px;top:942.40px;width:29.60px;height:29.50px;background:#4c4c4c;border-radius:5px"></div>
<div class="a" style="left:2035.40px;top:942.40px;width:29.60px;height:29.50px;background:#4c4c4c;border-radius:5px"></div>
<svg style="left:1961.60px;top:948.00px;" width="19.00" height="18.00" viewBox="0 0 19 18" preserveAspectRatio="none"><rect x="8.6" y="1.6" width="1.7" height="16" fill="#e6e6e6"/><circle cx="9.45" cy="1.8" r="1.7" fill="#e6e6e6"/><rect x="1.6" y="5" width="5.6" height="2.1" fill="#e6e6e6"/><rect x="11.6" y="5" width="4.6" height="2.1" fill="#e6e6e6"/><rect x="0" y="9" width="7.2" height="2.1" fill="#e6e6e6"/><rect x="11.6" y="9" width="7.2" height="2.1" fill="#e6e6e6"/><rect x="4.2" y="13" width="3" height="2.1" fill="#e6e6e6"/><rect x="11.6" y="13" width="6" height="2.1" fill="#e6e6e6"/></svg>
<svg style="left:2003.60px;top:949.60px;" width="14.00" height="14.60" viewBox="0 0 14 14.6" preserveAspectRatio="none"><path d="M0 14.4 V6.8 A7 7 0 0 1 14 6.8 V14.4 H10.2 V6.8 A3.2 3.2 0 0 0 3.8 6.8 V14.4 Z" fill="#e6e6e6"/><rect x="0" y="11.2" width="3.8" height="3.3" fill="#8e8e8e"/><rect x="10.2" y="11.2" width="3.8" height="3.3" fill="#8e8e8e"/></svg>
<svg style="left:2041.20px;top:949.40px;" width="19.00" height="17.00" viewBox="0 0 19 17" preserveAspectRatio="none"><rect x="0" y="0" width="4.6" height="6.2" fill="#e6e6e6"/><path d="M0 8.2 H4.6 V9.6 H1.5 V12.4 H4.6 V13.8 H0 Z" fill="#e6e6e6"/><path d="M6.6 0 H18.8 V8.6 L13.4 7.6 L16.6 12 L6.6 16.8 Z" fill="#e6e6e6"/><path d="M6 -0.4 L19 9.2" stroke="#4c4c4c" stroke-width="1.5"/></svg>
<svg style="left:2085.10px;top:952.10px;" width="9.20" height="11.40" viewBox="0 0 9.2 11.4" preserveAspectRatio="none"><path d="M0.8 0 H8.4 A0.8 0.8 0 0 1 9.2 0.8 V6.6 L4.6 11.4 L0 6.6 V0.8 A0.8 0.8 0 0 1 0.8 0 Z" fill="#cdcdcd"/></svg>
<svg style="left:2119.60px;top:947.80px;" width="19.00" height="19.00" viewBox="0 0 19 19" preserveAspectRatio="none"><circle cx="5.9" cy="5.9" r="5.4" fill="#cdcdcd"/><path d="M7.1 4.5 L1.6 -1 L-1 1.6 L4.5 7.1 Z" fill="#1f1f1f"/><path d="M8 8 L16.2 16.2" stroke="#cdcdcd" stroke-width="3.7" stroke-linecap="round"/></svg>
<div class="a" style="left:2158.80px;top:951.20px;width:20.00px;height:12.20px;background:#5a5a5a;border-radius:2px"></div>
<div class="t" style="left:2160.80px;top:949.80px;font-size:11.5px;line-height:15px;color:#1f1f1f;font-weight:700;-webkit-text-stroke:0;transform:scaleX(0.9633);">CC</div>
<div class="a" style="left:1956.00px;top:980.20px;width:236.40px;height:1.60px;background:#383838;"></div>
<div class="a" style="left:2192.4px;top:940px;width:885.5999999999999px;height:240px;overflow:hidden"><div class="a" style="left:-2192.4px;top:-940px;width:3840px;height:1400px">
<div class="t" style="left:2173.10px;top:947.40px;font-size:13px;line-height:17px;color:#c2c2c2;transform:scaleX(1.0134);">00:02:14:00</div>
<div class="t" style="left:2273.20px;top:947.40px;font-size:13px;line-height:17px;color:#c2c2c2;transform:scaleX(1.0134);">00:02:14:12</div>
<div class="t" style="left:2373.30px;top:947.40px;font-size:13px;line-height:17px;color:#c2c2c2;transform:scaleX(1.0134);">00:02:15:00</div>
<div class="t" style="left:2473.40px;top:947.40px;font-size:13px;line-height:17px;color:#c2c2c2;transform:scaleX(1.0134);">00:02:15:12</div>
<div class="t" style="left:2573.50px;top:947.40px;font-size:13px;line-height:17px;color:#c2c2c2;transform:scaleX(1.0134);">00:02:16:00</div>
<div class="t" style="left:2673.60px;top:947.40px;font-size:13px;line-height:17px;color:#c2c2c2;transform:scaleX(1.0134);">00:02:16:12</div>
<div class="t" style="left:2773.70px;top:947.40px;font-size:13px;line-height:17px;color:#c2c2c2;transform:scaleX(1.0134);">00:02:17:00</div>
<div class="t" style="left:2873.80px;top:947.40px;font-size:13px;line-height:17px;color:#c2c2c2;transform:scaleX(1.0134);">00:02:17:12</div>
<div class="t" style="left:2973.90px;top:947.40px;font-size:13px;line-height:17px;color:#c2c2c2;transform:scaleX(1.0134);">00:02:18:00</div>
<div class="t" style="left:3074.00px;top:947.40px;font-size:13px;line-height:17px;color:#c2c2c2;transform:scaleX(1.0134);">00:02:18:12</div>
<svg style="left:0;top:960px" width="3840" height="20" viewBox="0 960 3840 20"><rect x="2105.70" y="964.80" width="1.25" height="14.1" fill="#b0b0b0"/><rect x="2114.04" y="972.50" width="1.25" height="6.4" fill="#9a9a9a"/><rect x="2122.38" y="972.50" width="1.25" height="6.4" fill="#9a9a9a"/><rect x="2130.73" y="972.50" width="1.25" height="6.4" fill="#9a9a9a"/><rect x="2139.07" y="972.50" width="1.25" height="6.4" fill="#9a9a9a"/><rect x="2147.41" y="972.50" width="1.25" height="6.4" fill="#9a9a9a"/><rect x="2155.75" y="972.50" width="1.25" height="6.4" fill="#9a9a9a"/><rect x="2164.09" y="972.50" width="1.25" height="6.4" fill="#9a9a9a"/><rect x="2172.43" y="972.50" width="1.25" height="6.4" fill="#9a9a9a"/><rect x="2180.78" y="972.50" width="1.25" height="6.4" fill="#9a9a9a"/><rect x="2189.12" y="972.50" width="1.25" height="6.4" fill="#9a9a9a"/><rect x="2197.46" y="972.50" width="1.25" height="6.4" fill="#9a9a9a"/><rect x="2205.80" y="964.80" width="1.25" height="14.1" fill="#b0b0b0"/><rect x="2214.14" y="972.50" width="1.25" height="6.4" fill="#9a9a9a"/><rect x="2222.48" y="972.50" width="1.25" height="6.4" fill="#9a9a9a"/><rect x="2230.83" y="972.50" width="1.25" height="6.4" fill="#9a9a9a"/><rect x="2239.17" y="972.50" width="1.25" height="6.4" fill="#9a9a9a"/><rect x="2247.51" y="972.50" width="1.25" height="6.4" fill="#9a9a9a"/><rect x="2255.85" y="972.50" width="1.25" height="6.4" fill="#9a9a9a"/><rect x="2264.19" y="972.50" width="1.25" height="6.4" fill="#9a9a9a"/><rect x="2272.53" y="972.50" width="1.25" height="6.4" fill="#9a9a9a"/><rect x="2280.88" y="972.50" width="1.25" height="6.4" fill="#9a9a9a"/><rect x="2289.22" y="972.50" width="1.25" height="6.4" fill="#9a9a9a"/><rect x="2297.56" y="972.50" width="1.25" height="6.4" fill="#9a9a9a"/><rect x="2305.90" y="964.80" width="1.25" height="14.1" fill="#b0b0b0"/><rect x="2314.24" y="972.50" width="1.25" height="6.4" fill="#9a9a9a"/><rect x="2322.58" y="972.50" width="1.25" height="6.4" fill="#9a9a9a"/><rect x="2330.93" y="972.50" width="1.25" height="6.4" fill="#9a9a9a"/><rect x="2339.27" y="972.50" width="1.25" height="6.4" fill="#9a9a9a"/><rect x="2347.61" y="972.50" width="1.25" height="6.4" fill="#9a9a9a"/><rect x="2355.95" y="972.50" width="1.25" height="6.4" fill="#9a9a9a"/><rect x="2364.29" y="972.50" width="1.25" height="6.4" fill="#9a9a9a"/><rect x="2372.63" y="972.50" width="1.25" height="6.4" fill="#9a9a9a"/><rect x="2380.98" y="972.50" width="1.25" height="6.4" fill="#9a9a9a"/><rect x="2389.32" y="972.50" width="1.25" height="6.4" fill="#9a9a9a"/><rect x="2397.66" y="972.50" width="1.25" height="6.4" fill="#9a9a9a"/><rect x="2406.00" y="964.80" width="1.25" height="14.1" fill="#b0b0b0"/><rect x="2414.34" y="972.50" width="1.25" height="6.4" fill="#9a9a9a"/><rect x="2422.68" y="972.50" width="1.25" height="6.4" fill="#9a9a9a"/><rect x="2431.03" y="972.50" width="1.25" height="6.4" fill="#9a9a9a"/><rect x="2439.37" y="972.50" width="1.25" height="6.4" fill="#9a9a9a"/><rect x="2447.71" y="972.50" width="1.25" height="6.4" fill="#9a9a9a"/><rect x="2456.05" y="972.50" width="1.25" height="6.4" fill="#9a9a9a"/><rect x="2464.39" y="972.50" width="1.25" height="6.4" fill="#9a9a9a"/><rect x="2472.73" y="972.50" width="1.25" height="6.4" fill="#9a9a9a"/><rect x="2481.08" y="972.50" width="1.25" height="6.4" fill="#9a9a9a"/><rect x="2489.42" y="972.50" width="1.25" height="6.4" fill="#9a9a9a"/><rect x="2497.76" y="972.50" width="1.25" height="6.4" fill="#9a9a9a"/><rect x="2506.10" y="964.80" width="1.25" height="14.1" fill="#b0b0b0"/><rect x="2514.44" y="972.50" width="1.25" height="6.4" fill="#9a9a9a"/><rect x="2522.78" y="972.50" width="1.25" height="6.4" fill="#9a9a9a"/><rect x="2531.13" y="972.50" width="1.25" height="6.4" fill="#9a9a9a"/><rect x="2539.47" y="972.50" width="1.25" height="6.4" fill="#9a9a9a"/><rect x="2547.81" y="972.50" width="1.25" height="6.4" fill="#9a9a9a"/><rect x="2556.15" y="972.50" width="1.25" height="6.4" fill="#9a9a9a"/><rect x="2564.49" y="972.50" width="1.25" height="6.4" fill="#9a9a9a"/><rect x="2572.83" y="972.50" width="1.25" height="6.4" fill="#9a9a9a"/><rect x="2581.18" y="972.50" width="1.25" height="6.4" fill="#9a9a9a"/><rect x="2589.52" y="972.50" width="1.25" height="6.4" fill="#9a9a9a"/><rect x="2597.86" y="972.50" width="1.25" height="6.4" fill="#9a9a9a"/><rect x="2606.20" y="964.80" width="1.25" height="14.1" fill="#b0b0b0"/><rect x="2614.54" y="972.50" width="1.25" height="6.4" fill="#9a9a9a"/><rect x="2622.88" y="972.50" width="1.25" height="6.4" fill="#9a9a9a"/><rect x="2631.23" y="972.50" width="1.25" height="6.4" fill="#9a9a9a"/><rect x="2639.57" y="972.50" width="1.25" height="6.4" fill="#9a9a9a"/><rect x="2647.91" y="972.50" width="1.25" height="6.4" fill="#9a9a9a"/><rect x="2656.25" y="972.50" width="1.25" height="6.4" fill="#9a9a9a"/><rect x="2664.59" y="972.50" width="1.25" height="6.4" fill="#9a9a9a"/><rect x="2672.93" y="972.50" width="1.25" height="6.4" fill="#9a9a9a"/><rect x="2681.28" y="972.50" width="1.25" height="6.4" fill="#9a9a9a"/><rect x="2689.62" y="972.50" width="1.25" height="6.4" fill="#9a9a9a"/><rect x="2697.96" y="972.50" width="1.25" height="6.4" fill="#9a9a9a"/><rect x="2706.30" y="964.80" width="1.25" height="14.1" fill="#b0b0b0"/><rect x="2714.64" y="972.50" width="1.25" height="6.4" fill="#9a9a9a"/><rect x="2722.98" y="972.50" width="1.25" height="6.4" fill="#9a9a9a"/><rect x="2731.33" y="972.50" width="1.25" height="6.4" fill="#9a9a9a"/><rect x="2739.67" y="972.50" width="1.25" height="6.4" fill="#9a9a9a"/><rect x="2748.01" y="972.50" width="1.25" height="6.4" fill="#9a9a9a"/><rect x="2756.35" y="972.50" width="1.25" height="6.4" fill="#9a9a9a"/><rect x="2764.69" y="972.50" width="1.25" height="6.4" fill="#9a9a9a"/><rect x="2773.03" y="972.50" width="1.25" height="6.4" fill="#9a9a9a"/><rect x="2781.38" y="972.50" width="1.25" height="6.4" fill="#9a9a9a"/><rect x="2789.72" y="972.50" width="1.25" height="6.4" fill="#9a9a9a"/><rect x="2798.06" y="972.50" width="1.25" height="6.4" fill="#9a9a9a"/><rect x="2806.40" y="964.80" width="1.25" height="14.1" fill="#b0b0b0"/><rect x="2814.74" y="972.50" width="1.25" height="6.4" fill="#9a9a9a"/><rect x="2823.08" y="972.50" width="1.25" height="6.4" fill="#9a9a9a"/><rect x="2831.43" y="972.50" width="1.25" height="6.4" fill="#9a9a9a"/><rect x="2839.77" y="972.50" width="1.25" height="6.4" fill="#9a9a9a"/><rect x="2848.11" y="972.50" width="1.25" height="6.4" fill="#9a9a9a"/><rect x="2856.45" y="972.50" width="1.25" height="6.4" fill="#9a9a9a"/><rect x="2864.79" y="972.50" width="1.25" height="6.4" fill="#9a9a9a"/><rect x="2873.13" y="972.50" width="1.25" height="6.4" fill="#9a9a9a"/><rect x="2881.48" y="972.50" width="1.25" height="6.4" fill="#9a9a9a"/><rect x="2889.82" y="972.50" width="1.25" height="6.4" fill="#9a9a9a"/><rect x="2898.16" y="972.50" width="1.25" height="6.4" fill="#9a9a9a"/><rect x="2906.50" y="964.80" width="1.25" height="14.1" fill="#b0b0b0"/><rect x="2914.84" y="972.50" width="1.25" height="6.4" fill="#9a9a9a"/><rect x="2923.18" y="972.50" width="1.25" height="6.4" fill="#9a9a9a"/><rect x="2931.53" y="972.50" width="1.25" height="6.4" fill="#9a9a9a"/><rect x="2939.87" y="972.50" width="1.25" height="6.4" fill="#9a9a9a"/><rect x="2948.21" y="972.50" width="1.25" height="6.4" fill="#9a9a9a"/><rect x="2956.55" y="972.50" width="1.25" height="6.4" fill="#9a9a9a"/><rect x="2964.89" y="972.50" width="1.25" height="6.4" fill="#9a9a9a"/><rect x="2973.23" y="972.50" width="1.25" height="6.4" fill="#9a9a9a"/><rect x="2981.58" y="972.50" width="1.25" height="6.4" fill="#9a9a9a"/><rect x="2989.92" y="972.50" width="1.25" height="6.4" fill="#9a9a9a"/><rect x="2998.26" y="972.50" width="1.25" height="6.4" fill="#9a9a9a"/><rect x="3006.60" y="964.80" width="1.25" height="14.1" fill="#b0b0b0"/><rect x="3014.94" y="972.50" width="1.25" height="6.4" fill="#9a9a9a"/><rect x="3023.28" y="972.50" width="1.25" height="6.4" fill="#9a9a9a"/><rect x="3031.63" y="972.50" width="1.25" height="6.4" fill="#9a9a9a"/><rect x="3039.97" y="972.50" width="1.25" height="6.4" fill="#9a9a9a"/><rect x="3048.31" y="972.50" width="1.25" height="6.4" fill="#9a9a9a"/><rect x="3056.65" y="972.50" width="1.25" height="6.4" fill="#9a9a9a"/><rect x="3064.99" y="972.50" width="1.25" height="6.4" fill="#9a9a9a"/><rect x="3073.33" y="972.50" width="1.25" height="6.4" fill="#9a9a9a"/></svg>
<div class="a" style="left:2192.40px;top:978.90px;width:885.60px;height:3.40px;background:#e9e433;"></div>
<svg style="left:2192.40px;top:982.2px" width="69.60" height="76.00" viewBox="0 0 84 76" preserveAspectRatio="xMidYMid slice"><use href="#c_fjord"/></svg>
<svg style="left:2262.00px;top:982.2px" width="94.00" height="76.00" viewBox="0 0 84 76" preserveAspectRatio="xMidYMid slice"><use href="#c_kayak"/></svg>
<svg style="left:2356.00px;top:982.2px" width="83.80" height="76.00" viewBox="0 0 84 76" preserveAspectRatio="xMidYMid slice"><use href="#c_kayak"/></svg>
<svg style="left:2439.80px;top:982.2px" width="82.80" height="76.00" viewBox="0 0 84 76" preserveAspectRatio="xMidYMid slice"><use href="#c_white1"/></svg>
<svg style="left:2522.60px;top:982.2px" width="84.00" height="76.00" viewBox="0 0 84 76" preserveAspectRatio="xMidYMid slice"><use href="#c_fall"/></svg>
<svg style="left:2606.60px;top:982.2px" width="83.20" height="76.00" viewBox="0 0 84 76" preserveAspectRatio="xMidYMid slice"><use href="#c_white2"/></svg>
<svg style="left:2689.80px;top:982.2px" width="79.70" height="76.00" viewBox="0 0 84 76" preserveAspectRatio="xMidYMid slice"><use href="#c_lake"/></svg>
<svg style="left:2769.50px;top:982.2px" width="70.10" height="76.00" viewBox="0 0 84 76" preserveAspectRatio="xMidYMid slice"><use href="#c_lake"/></svg>
<svg style="left:2840.60px;top:982.2px" width="82.80" height="76.00" viewBox="0 0 84 76" preserveAspectRatio="xMidYMid slice"><use href="#c_falls3"/></svg>
<svg style="left:2923.40px;top:982.2px" width="82.60" height="76.00" viewBox="0 0 84 76" preserveAspectRatio="xMidYMid slice"><use href="#c_falls3"/></svg>
<svg style="left:3006.00px;top:982.2px" width="83.00" height="76.00" viewBox="0 0 84 76" preserveAspectRatio="xMidYMid slice"><use href="#c_falls3"/></svg>
<div class="a" style="left:2839.20px;top:982.20px;width:1.60px;height:76.00px;background:#2a2f2f;"></div>
<div class="a" style="left:2192.4px;top:1064.8px;width:885.5999999999999px;height:76.0px;overflow:hidden"><div class="a" style="left:-2192.4px;top:-1064.8px;width:3840px;height:1400px">
<div class="a" style="left:2192.80px;top:1064.80px;width:161.80px;height:76.00px;background:#02567a;border-radius:3px 3px 0 0"></div>
<div class="a" style="left:2357.00px;top:1064.80px;width:482.40px;height:76.00px;background:#02567a;border-radius:3px 3px 0 0"></div>
<div class="a" style="left:2842.00px;top:1064.80px;width:248.00px;height:76.00px;background:#02567a;border-radius:3px 3px 0 0"></div>
<svg style="left:0;top:1060px" width="3840" height="90" viewBox="0 1060 3840 90"><path d="M2192.8 1117.8 V1103.2H2193.2V1101.8H2195.0H2195.0V1099.8H2197.4H2197.4V1099.6H2198.6H2198.6V1100.4H2199.6H2199.6V1099.6H2200.8H2200.8V1099.7H2202.0H2202.0V1100.0H2203.2H2203.2V1100.4H2205.0H2205.0V1100.7H2206.0H2206.0V1101.0H2207.0H2207.0V1101.4H2208.0H2208.0V1100.0H2209.0H2209.0V1102.3H2210.2H2210.2V1100.9H2212.0H2212.0V1091.3H2213.0H2213.0V1086.2H2215.4H2215.4V1088.1H2216.4H2216.4V1088.7H2218.8H2218.8V1093.6H2221.2H2221.2V1086.2H2222.6H2222.6V1086.2H2223.6H2223.6V1093.3H2225.0H2225.0V1099.3H2226.2H2226.2V1087.2H2228.6H2228.6V1091.6H2229.8H2229.8V1087.5H2230.8H2230.8V1085.3H2232.6H2232.6V1094.1H2233.8H2233.8V1092.1H2236.2H2236.2V1086.3H2237.2H2237.2V1091.3H2238.6H2238.6V1101.1H2240.4H2240.4V1101.4H2241.6H2241.6V1102.9H2243.0H2243.0V1101.4H2244.4H2244.4V1102.4H2245.4H2245.4V1101.7H2246.8H2246.8V1102.9H2248.6H2248.6V1102.3H2250.4H2250.4V1097.3H2251.4H2251.4V1091.6H2253.8H2253.8V1087.2H2256.2H2256.2V1091.4H2257.2H2257.2V1094.3H2258.2H2258.2V1092.7H2259.6H2259.6V1089.5H2261.0H2261.0V1093.9H2262.2H2262.2V1093.8H2264.0H2264.0V1101.5H2265.4H2265.4V1098.2H2267.2H2267.2V1099.9H2269.6H2269.6V1099.6H2270.6H2270.6V1098.1H2273.0H2273.0V1098.3H2274.4H2274.4V1090.1H2276.2H2276.2V1093.2H2277.2H2277.2V1097.3H2278.2H2278.2V1088.7H2279.6H2279.6V1089.7H2280.8H2280.8V1087.3H2282.6H2282.6V1090.6H2284.4H2284.4V1090.7H2285.8H2285.8V1086.4H2286.8H2286.8V1095.1H2289.2H2289.2V1094.3H2290.2H2290.2V1094.6H2291.6H2291.6V1088.1H2292.6H2292.6V1095.4H2293.8H2293.8V1097.7H2295.6H2295.6V1091.3H2296.8H2296.8V1089.5H2298.0H2298.0V1095.3H2299.8H2299.8V1097.3H2301.0H2301.0V1088.1H2303.4H2303.4V1091.7H2304.4H2304.4V1087.4H2306.2H2306.2V1086.4H2308.0H2308.0V1093.3H2309.8H2309.8V1091.3H2311.2H2311.2V1100.7H2312.4H2312.4V1100.5H2314.2H2314.2V1101.1H2315.6H2315.6V1102.2H2317.4H2317.4V1095.9H2319.8H2319.8V1090.0H2321.0H2321.0V1092.1H2322.4H2322.4V1100.5H2323.6H2323.6V1094.5H2325.0H2325.0V1090.8H2326.2H2326.2V1092.5H2328.6H2328.6V1095.3H2331.0H2331.0V1096.8H2332.0H2332.0V1096.2H2334.4H2334.4V1097.4H2335.6H2335.6V1092.9H2337.4H2337.4V1095.0H2338.8H2338.8V1093.0H2340.0H2340.0V1097.4H2341.2H2341.2V1099.0H2342.2H2342.2V1097.3H2344.0H2344.0V1094.6H2345.4H2345.4V1094.6H2347.2H2347.2V1100.5H2349.0H2349.0V1098.6H2350.4H2350.4V1095.8H2352.8H2352.8V1097.8H2354.0H2354.0V1097.7H2354.6V1117.8Z" fill="#63bcf9"/><path d="M2192.8 1141.2H2193.2V1138.8H2195.0H2195.0V1136.4H2197.4H2197.4V1136.0H2198.6H2198.6V1137.1H2199.6H2199.6V1136.6H2200.8H2200.8V1136.2H2202.0H2202.0V1136.6H2203.2H2203.2V1136.9H2205.0H2205.0V1137.6H2206.0H2206.0V1138.0H2207.0H2207.0V1138.5H2208.0H2208.0V1137.0H2209.0H2209.0V1139.4H2210.2H2210.2V1137.9H2212.0H2212.0V1127.4H2213.0H2213.0V1120.1H2215.4H2215.4V1121.7H2216.4H2216.4V1123.9H2218.8H2218.8V1129.8H2221.2H2221.2V1121.1H2222.6H2222.6V1120.4H2223.6H2223.6V1128.3H2225.0H2225.0V1135.6H2226.2H2226.2V1120.3H2228.6H2228.6V1127.9H2229.8H2229.8V1123.1H2230.8H2230.8V1120.4H2232.6H2232.6V1129.9H2233.8H2233.8V1128.3H2236.2H2236.2V1122.4H2237.2H2237.2V1127.0H2238.6H2238.6V1137.9H2240.4H2240.4V1138.4H2241.6H2241.6V1140.0H2243.0H2243.0V1138.3H2244.4H2244.4V1139.4H2245.4H2245.4V1138.6H2246.8H2246.8V1140.1H2248.6H2248.6V1139.4H2250.4H2250.4V1133.7H2251.4H2251.4V1126.9H2253.8H2253.8V1122.7H2256.2H2256.2V1127.3H2257.2H2257.2V1130.0H2258.2H2258.2V1128.6H2259.6H2259.6V1123.3H2261.0H2261.0V1130.4H2262.2H2262.2V1130.4H2264.0H2264.0V1138.2H2265.4H2265.4V1134.4H2267.2H2267.2V1136.3H2269.6H2269.6V1136.1H2270.6H2270.6V1135.0H2273.0H2273.0V1134.6H2274.4H2274.4V1125.6H2276.2H2276.2V1129.4H2277.2H2277.2V1133.9H2278.2H2278.2V1122.0H2279.6H2279.6V1125.9H2280.8H2280.8V1120.5H2282.6H2282.6V1125.0H2284.4H2284.4V1125.3H2285.8H2285.8V1119.2H2286.8H2286.8V1130.6H2289.2H2289.2V1129.9H2290.2H2290.2V1131.2H2291.6H2291.6V1124.0H2292.6H2292.6V1131.0H2293.8H2293.8V1134.5H2295.6H2295.6V1126.4H2296.8H2296.8V1125.0H2298.0H2298.0V1131.6H2299.8H2299.8V1134.0H2301.0H2301.0V1122.8H2303.4H2303.4V1126.9H2304.4H2304.4V1122.2H2306.2H2306.2V1121.1H2308.0H2308.0V1129.8H2309.8H2309.8V1127.4H2311.2H2311.2V1137.6H2312.4H2312.4V1137.3H2314.2H2314.2V1138.2H2315.6H2315.6V1139.1H2317.4H2317.4V1131.8H2319.8H2319.8V1123.9H2321.0H2321.0V1126.9H2322.4H2322.4V1137.2H2323.6H2323.6V1130.2H2325.0H2325.0V1127.0H2326.2H2326.2V1128.9H2328.6H2328.6V1130.6H2331.0H2331.0V1132.9H2332.0H2332.0V1132.7H2334.4H2334.4V1134.2H2335.6H2335.6V1128.6H2337.4H2337.4V1130.6H2338.8H2338.8V1128.7H2340.0H2340.0V1133.9H2341.2H2341.2V1135.4H2342.2H2342.2V1133.8H2344.0H2344.0V1131.1H2345.4H2345.4V1130.7H2347.2H2347.2V1137.6H2349.0H2349.0V1134.5H2350.4H2350.4V1132.1H2352.8H2352.8V1134.3H2354.0H2354.0V1133.4H2354.6V1141.2Z" fill="#63bcf9"/></svg>
<svg style="left:0;top:1060px" width="3840" height="90" viewBox="0 1060 3840 90"><path d="M2357.0 1117.8 V1103.2H2357.4V1091.9H2358.4H2358.4V1091.8H2360.8H2360.8V1091.5H2362.2H2362.2V1094.0H2364.6H2364.6V1101.8H2365.6H2365.6V1101.6H2366.8H2366.8V1101.4H2369.2H2369.2V1101.2H2371.6H2371.6V1093.6H2373.0H2373.0V1092.9H2375.4H2375.4V1097.7H2376.8H2376.8V1100.9H2377.8H2377.8V1094.7H2379.0H2379.0V1099.1H2380.2H2380.2V1098.3H2382.6H2382.6V1095.6H2383.8H2383.8V1097.4H2385.2H2385.2V1100.2H2386.4H2386.4V1100.6H2387.8H2387.8V1099.5H2390.2H2390.2V1099.0H2391.4H2391.4V1098.4H2392.4H2392.4V1100.5H2393.6H2393.6V1098.4H2396.0H2396.0V1100.1H2397.4H2397.4V1100.3H2398.4H2398.4V1101.0H2400.2H2400.2V1099.6H2402.6H2402.6V1090.1H2404.4H2404.4V1085.8H2406.8H2406.8V1100.3H2408.2H2408.2V1086.5H2410.6H2410.6V1099.0H2412.0H2412.0V1096.9H2413.0H2413.0V1102.6H2414.4H2414.4V1102.9H2416.2H2416.2V1102.5H2417.6H2417.6V1102.7H2420.0H2420.0V1102.5H2421.2H2421.2V1102.6H2422.2H2422.2V1102.7H2423.2H2423.2V1102.6H2425.6H2425.6V1102.5H2426.6H2426.6V1102.6H2428.4H2428.4V1102.8H2430.2H2430.2V1102.7H2432.0H2432.0V1102.7H2433.0H2433.0V1102.8H2434.8H2434.8V1102.9H2437.2H2437.2V1102.6H2438.4H2438.4V1102.6H2439.8H2439.8V1102.7H2440.8H2440.8V1102.9H2442.0H2442.0V1102.8H2443.0H2443.0V1102.8H2445.4H2445.4V1102.7H2446.8H2446.8V1102.8H2449.2H2449.2V1102.8H2450.6H2450.6V1102.6H2452.4H2452.4V1102.9H2454.8H2454.8V1102.9H2456.0H2456.0V1096.7H2457.2H2457.2V1085.8H2458.6H2458.6V1086.8H2461.0H2461.0V1085.9H2462.0H2462.0V1086.5H2463.4H2463.4V1086.4H2465.2H2465.2V1098.1H2466.2H2466.2V1087.1H2468.0H2468.0V1092.1H2469.4H2469.4V1090.5H2470.4H2470.4V1089.9H2472.2H2472.2V1091.8H2474.0H2474.0V1095.6H2475.0H2475.0V1087.8H2476.2H2476.2V1097.4H2477.6H2477.6V1092.8H2479.4H2479.4V1092.6H2480.8H2480.8V1090.6H2482.0H2482.0V1094.2H2483.8H2483.8V1090.0H2484.8H2484.8V1088.1H2487.2H2487.2V1092.0H2489.0H2489.0V1095.7H2490.4H2490.4V1087.6H2491.4H2491.4V1091.1H2493.8H2493.8V1092.6H2496.2H2496.2V1090.9H2497.4H2497.4V1095.9H2499.8H2499.8V1092.6H2500.8H2500.8V1095.8H2503.2H2503.2V1102.0H2504.6H2504.6V1101.7H2507.0H2507.0V1102.1H2508.4H2508.4V1101.4H2509.8H2509.8V1102.6H2512.2H2512.2V1101.9H2513.4H2513.4V1101.8H2515.8H2515.8V1101.7H2516.8H2516.8V1101.8H2519.2H2519.2V1102.0H2520.2H2520.2V1102.2H2521.2H2521.2V1102.7H2523.0H2523.0V1102.9H2524.8H2524.8V1102.2H2526.2H2526.2V1101.7H2527.2H2527.2V1102.8H2528.6H2528.6V1102.8H2529.6H2529.6V1102.1H2531.4H2531.4V1102.4H2533.2H2533.2V1102.7H2534.6H2534.6V1101.8H2536.4H2536.4V1102.6H2537.4H2537.4V1101.7H2538.8H2538.8V1102.1H2541.2H2541.2V1102.1H2542.2H2542.2V1102.8H2544.0H2544.0V1101.4H2545.0H2545.0V1096.3H2546.2H2546.2V1086.7H2547.4H2547.4V1099.1H2548.8H2548.8V1089.2H2550.2H2550.2V1099.9H2551.4H2551.4V1092.9H2552.6H2552.6V1097.1H2555.0H2555.0V1092.9H2556.2H2556.2V1091.3H2557.2H2557.2V1091.2H2559.6H2559.6V1086.2H2560.8H2560.8V1086.1H2563.2H2563.2V1089.6H2565.6H2565.6V1087.7H2567.4H2567.4V1089.2H2568.8H2568.8V1090.7H2571.2H2571.2V1092.5H2572.2H2572.2V1086.0H2573.4H2573.4V1085.8H2574.8H2574.8V1089.9H2576.0H2576.0V1092.3H2578.4H2578.4V1090.9H2579.6H2579.6V1087.2H2580.8H2580.8V1096.0H2583.2H2583.2V1088.5H2585.6H2585.6V1100.5H2588.0H2588.0V1090.3H2589.2H2589.2V1100.2H2591.6H2591.6V1089.9H2592.6H2592.6V1090.1H2595.0H2595.0V1091.0H2597.4H2597.4V1091.6H2599.2H2599.2V1090.6H2601.6H2601.6V1089.1H2603.0H2603.0V1091.9H2604.2H2604.2V1087.2H2605.2H2605.2V1091.8H2606.4H2606.4V1088.1H2608.2H2608.2V1091.6H2609.4H2609.4V1091.0H2610.8H2610.8V1096.0H2613.2H2613.2V1089.3H2614.4H2614.4V1087.0H2615.4H2615.4V1089.3H2617.2H2617.2V1091.0H2619.0H2619.0V1086.8H2620.2H2620.2V1090.6H2621.4H2621.4V1087.1H2623.2H2623.2V1086.2H2625.0H2625.0V1092.6H2626.4H2626.4V1088.7H2628.2H2628.2V1099.0H2629.2H2629.2V1085.7H2630.6H2630.6V1090.9H2632.4H2632.4V1086.0H2633.8H2633.8V1093.5H2635.2H2635.2V1098.1H2637.0H2637.0V1095.6H2638.4H2638.4V1099.7H2639.4H2639.4V1094.7H2640.8H2640.8V1094.9H2642.2H2642.2V1094.9H2643.4H2643.4V1092.2H2644.4H2644.4V1093.7H2646.8H2646.8V1099.2H2648.6H2648.6V1093.6H2649.8H2649.8V1087.9H2650.8H2650.8V1088.6H2652.0H2652.0V1090.3H2654.4H2654.4V1096.3H2656.8H2656.8V1098.6H2657.8H2657.8V1095.5H2659.0H2659.0V1098.7H2660.8H2660.8V1090.4H2663.2H2663.2V1088.9H2665.6H2665.6V1087.0H2667.0H2667.0V1091.8H2668.2H2668.2V1089.4H2670.0H2670.0V1090.1H2671.4H2671.4V1095.4H2672.6H2672.6V1089.2H2673.8H2673.8V1092.6H2675.6H2675.6V1088.5H2677.4H2677.4V1090.5H2678.8H2678.8V1086.3H2680.0H2680.0V1091.0H2681.4H2681.4V1095.3H2682.4H2682.4V1095.4H2684.2H2684.2V1093.5H2686.6H2686.6V1089.4H2687.8H2687.8V1088.8H2688.8H2688.8V1094.2H2690.0H2690.0V1087.6H2691.8H2691.8V1093.9H2693.2H2693.2V1088.6H2694.2H2694.2V1093.1H2696.0H2696.0V1089.2H2697.0H2697.0V1096.7H2698.2H2698.2V1091.4H2699.2H2699.2V1091.8H2700.2H2700.2V1091.8H2702.0H2702.0V1092.2H2704.4H2704.4V1098.1H2705.8H2705.8V1099.6H2706.8H2706.8V1093.0H2709.2H2709.2V1097.1H2710.6H2710.6V1097.4H2712.4H2712.4V1095.1H2713.4H2713.4V1096.7H2714.6H2714.6V1098.4H2715.8H2715.8V1098.2H2716.8H2716.8V1096.4H2718.0H2718.0V1101.0H2720.4H2720.4V1100.2H2722.2H2722.2V1101.6H2724.0H2724.0V1098.1H2725.0H2725.0V1100.1H2726.2H2726.2V1100.0H2728.0H2728.0V1100.5H2729.8H2729.8V1100.8H2731.6H2731.6V1101.0H2733.4H2733.4V1101.4H2734.6H2734.6V1100.8H2735.8H2735.8V1102.0H2737.0H2737.0V1102.1H2738.2H2738.2V1101.2H2739.2H2739.2V1101.7H2740.6H2740.6V1102.7H2742.0H2742.0V1102.9H2743.8H2743.8V1102.8H2746.2H2746.2V1101.9H2747.4H2747.4V1101.9H2748.8H2748.8V1102.2H2751.2H2751.2V1102.1H2753.6H2753.6V1102.1H2755.4H2755.4V1102.4H2756.8H2756.8V1102.3H2758.0H2758.0V1102.4H2759.4H2759.4V1102.4H2760.6H2760.6V1102.0H2761.8H2761.8V1102.3H2763.2H2763.2V1102.0H2765.0H2765.0V1103.0H2766.4H2766.4V1102.2H2768.2H2768.2V1102.4H2769.2H2769.2V1102.0H2770.6H2770.6V1102.3H2772.4H2772.4V1102.3H2773.8H2773.8V1102.4H2776.2H2776.2V1102.3H2777.2H2777.2V1102.6H2778.2H2778.2V1102.4H2780.6H2780.6V1099.1H2781.6H2781.6V1100.1H2782.6H2782.6V1090.8H2783.8H2783.8V1089.8H2786.2H2786.2V1095.0H2788.6H2788.6V1099.9H2790.4H2790.4V1095.1H2791.8H2791.8V1088.6H2794.2H2794.2V1094.2H2796.6H2796.6V1092.8H2799.0H2799.0V1088.7H2800.8H2800.8V1089.6H2801.8H2801.8V1087.3H2803.0H2803.0V1094.7H2804.0H2804.0V1087.5H2805.8H2805.8V1097.5H2807.2H2807.2V1094.3H2809.0H2809.0V1091.9H2810.8H2810.8V1091.9H2812.0H2812.0V1087.3H2813.4H2813.4V1090.9H2815.2H2815.2V1100.3H2816.6H2816.6V1096.6H2818.4H2818.4V1093.2H2819.8H2819.8V1090.9H2820.8H2820.8V1098.3H2822.2H2822.2V1086.3H2823.6H2823.6V1089.7H2824.6H2824.6V1089.3H2826.0H2826.0V1092.5H2827.4H2827.4V1098.5H2828.6H2828.6V1093.9H2830.0H2830.0V1087.5H2832.4H2832.4V1095.7H2834.8H2834.8V1089.6H2836.6H2836.6V1087.2H2837.6H2837.6V1088.7H2839.4V1117.8Z" fill="#63bcf9"/><path d="M2357.0 1141.2H2357.4V1127.4H2358.4H2358.4V1128.1H2360.8H2360.8V1127.0H2362.2H2362.2V1129.2H2364.6H2364.6V1138.8H2365.6H2365.6V1138.6H2366.8H2366.8V1138.2H2369.2H2369.2V1138.1H2371.6H2371.6V1128.7H2373.0H2373.0V1128.7H2375.4H2375.4V1133.5H2376.8H2376.8V1137.8H2377.8H2377.8V1129.8H2379.0H2379.0V1135.9H2380.2H2380.2V1134.9H2382.6H2382.6V1131.7H2383.8H2383.8V1133.4H2385.2H2385.2V1137.2H2386.4H2386.4V1137.5H2387.8H2387.8V1136.3H2390.2H2390.2V1135.3H2391.4H2391.4V1135.2H2392.4H2392.4V1137.2H2393.6H2393.6V1135.0H2396.0H2396.0V1137.1H2397.4H2397.4V1136.8H2398.4H2398.4V1137.9H2400.2H2400.2V1135.9H2402.6H2402.6V1125.7H2404.4H2404.4V1119.5H2406.8H2406.8V1136.8H2408.2H2408.2V1120.4H2410.6H2410.6V1135.7H2412.0H2412.0V1132.5H2413.0H2413.0V1139.7H2414.4H2414.4V1140.1H2416.2H2416.2V1139.6H2417.6H2417.6V1139.9H2420.0H2420.0V1139.6H2421.2H2421.2V1139.7H2422.2H2422.2V1139.8H2423.2H2423.2V1139.7H2425.6H2425.6V1139.6H2426.6H2426.6V1139.7H2428.4H2428.4V1139.9H2430.2H2430.2V1139.8H2432.0H2432.0V1139.8H2433.0H2433.0V1140.0H2434.8H2434.8V1140.0H2437.2H2437.2V1139.7H2438.4H2438.4V1139.7H2439.8H2439.8V1139.9H2440.8H2440.8V1140.1H2442.0H2442.0V1140.0H2443.0H2443.0V1139.9H2445.4H2445.4V1139.8H2446.8H2446.8V1140.0H2449.2H2449.2V1139.8H2450.6H2450.6V1139.7H2452.4H2452.4V1140.1H2454.8H2454.8V1140.0H2456.0H2456.0V1133.3H2457.2H2457.2V1121.5H2458.6H2458.6V1120.5H2461.0H2461.0V1121.7H2462.0H2462.0V1121.1H2463.4H2463.4V1120.9H2465.2H2465.2V1134.9H2466.2H2466.2V1122.9H2468.0H2468.0V1126.4H2469.4H2469.4V1125.9H2470.4H2470.4V1125.2H2472.2H2472.2V1128.1H2474.0H2474.0V1131.0H2475.0H2475.0V1123.2H2476.2H2476.2V1134.0H2477.6H2477.6V1128.2H2479.4H2479.4V1127.8H2480.8H2480.8V1126.1H2482.0H2482.0V1130.6H2483.8H2483.8V1124.2H2484.8H2484.8V1122.2H2487.2H2487.2V1127.6H2489.0H2489.0V1131.5H2490.4H2490.4V1122.5H2491.4H2491.4V1125.6H2493.8H2493.8V1128.5H2496.2H2496.2V1125.6H2497.4H2497.4V1131.8H2499.8H2499.8V1128.7H2500.8H2500.8V1131.2H2503.2H2503.2V1139.1H2504.6H2504.6V1138.8H2507.0H2507.0V1139.2H2508.4H2508.4V1138.4H2509.8H2509.8V1139.7H2512.2H2512.2V1138.9H2513.4H2513.4V1138.9H2515.8H2515.8V1138.8H2516.8H2516.8V1138.9H2519.2H2519.2V1139.0H2520.2H2520.2V1139.2H2521.2H2521.2V1139.8H2523.0H2523.0V1140.0H2524.8H2524.8V1139.3H2526.2H2526.2V1138.7H2527.2H2527.2V1140.0H2528.6H2528.6V1139.9H2529.6H2529.6V1139.1H2531.4H2531.4V1139.5H2533.2H2533.2V1139.8H2534.6H2534.6V1138.7H2536.4H2536.4V1139.7H2537.4H2537.4V1138.6H2538.8H2538.8V1139.2H2541.2H2541.2V1139.2H2542.2H2542.2V1139.9H2544.0H2544.0V1138.3H2545.0H2545.0V1132.3H2546.2H2546.2V1122.7H2547.4H2547.4V1135.3H2548.8H2548.8V1125.4H2550.2H2550.2V1136.8H2551.4H2551.4V1127.8H2552.6H2552.6V1133.6H2555.0H2555.0V1129.3H2556.2H2556.2V1127.7H2557.2H2557.2V1126.3H2559.6H2559.6V1121.5H2560.8H2560.8V1119.1H2563.2H2563.2V1123.4H2565.6H2565.6V1121.1H2567.4H2567.4V1124.1H2568.8H2568.8V1125.2H2571.2H2571.2V1127.4H2572.2H2572.2V1120.1H2573.4H2573.4V1120.0H2574.8H2574.8V1124.2H2576.0H2576.0V1128.8H2578.4H2578.4V1126.8H2579.6H2579.6V1120.8H2580.8H2580.8V1131.8H2583.2H2583.2V1122.7H2585.6H2585.6V1137.3H2588.0H2588.0V1124.8H2589.2H2589.2V1136.7H2591.6H2591.6V1126.2H2592.6H2592.6V1126.5H2595.0H2595.0V1126.9H2597.4H2597.4V1125.8H2599.2H2599.2V1124.5H2601.6H2601.6V1122.8H2603.0H2603.0V1127.6H2604.2H2604.2V1121.7H2605.2H2605.2V1126.6H2606.4H2606.4V1121.7H2608.2H2608.2V1127.5H2609.4H2609.4V1126.2H2610.8H2610.8V1132.3H2613.2H2613.2V1125.0H2614.4H2614.4V1123.0H2615.4H2615.4V1125.5H2617.2H2617.2V1126.2H2619.0H2619.0V1121.3H2620.2H2620.2V1125.9H2621.4H2621.4V1121.0H2623.2H2623.2V1122.1H2625.0H2625.0V1129.2H2626.4H2626.4V1124.2H2628.2H2628.2V1135.4H2629.2H2629.2V1120.3H2630.6H2630.6V1126.7H2632.4H2632.4V1119.5H2633.8H2633.8V1129.4H2635.2H2635.2V1134.1H2637.0H2637.0V1131.7H2638.4H2638.4V1136.1H2639.4H2639.4V1131.4H2640.8H2640.8V1130.2H2642.2H2642.2V1130.1H2643.4H2643.4V1127.4H2644.4H2644.4V1130.3H2646.8H2646.8V1136.1H2648.6H2648.6V1129.3H2649.8H2649.8V1122.0H2650.8H2650.8V1125.0H2652.0H2652.0V1125.1H2654.4H2654.4V1132.7H2656.8H2656.8V1134.9H2657.8H2657.8V1131.2H2659.0H2659.0V1135.3H2660.8H2660.8V1125.0H2663.2H2663.2V1122.9H2665.6H2665.6V1121.6H2667.0H2667.0V1127.6H2668.2H2668.2V1123.8H2670.0H2670.0V1124.3H2671.4H2671.4V1131.5H2672.6H2672.6V1125.3H2673.8H2673.8V1127.0H2675.6H2675.6V1124.5H2677.4H2677.4V1124.5H2678.8H2678.8V1122.4H2680.0H2680.0V1126.5H2681.4H2681.4V1131.9H2682.4H2682.4V1131.5H2684.2H2684.2V1128.8H2686.6H2686.6V1125.4H2687.8H2687.8V1123.9H2688.8H2688.8V1130.7H2690.0H2690.0V1122.7H2691.8H2691.8V1129.1H2693.2H2693.2V1122.6H2694.2H2694.2V1128.9H2696.0H2696.0V1124.9H2697.0H2697.0V1132.9H2698.2H2698.2V1127.6H2699.2H2699.2V1128.2H2700.2H2700.2V1128.3H2702.0H2702.0V1127.7H2704.4H2704.4V1133.9H2705.8H2705.8V1136.3H2706.8H2706.8V1128.8H2709.2H2709.2V1133.2H2710.6H2710.6V1133.9H2712.4H2712.4V1131.8H2713.4H2713.4V1133.4H2714.6H2714.6V1134.9H2715.8H2715.8V1134.2H2716.8H2716.8V1132.4H2718.0H2718.0V1138.0H2720.4H2720.4V1137.2H2722.2H2722.2V1138.6H2724.0H2724.0V1134.4H2725.0H2725.0V1136.6H2726.2H2726.2V1136.4H2728.0H2728.0V1137.3H2729.8H2729.8V1137.9H2731.6H2731.6V1137.6H2733.4H2733.4V1138.3H2734.6H2734.6V1137.5H2735.8H2735.8V1139.1H2737.0H2737.0V1139.1H2738.2H2738.2V1138.1H2739.2H2739.2V1138.7H2740.6H2740.6V1139.9H2742.0H2742.0V1140.1H2743.8H2743.8V1140.0H2746.2H2746.2V1138.8H2747.4H2747.4V1138.8H2748.8H2748.8V1139.2H2751.2H2751.2V1139.1H2753.6H2753.6V1139.0H2755.4H2755.4V1139.4H2756.8H2756.8V1139.4H2758.0H2758.0V1139.3H2759.4H2759.4V1139.4H2760.6H2760.6V1139.0H2761.8H2761.8V1139.4H2763.2H2763.2V1138.9H2765.0H2765.0V1140.1H2766.4H2766.4V1139.3H2768.2H2768.2V1139.5H2769.2H2769.2V1139.1H2770.6H2770.6V1139.4H2772.4H2772.4V1139.3H2773.8H2773.8V1139.5H2776.2H2776.2V1139.4H2777.2H2777.2V1139.7H2778.2H2778.2V1139.4H2780.6H2780.6V1135.5H2781.6H2781.6V1136.9H2782.6H2782.6V1125.1H2783.8H2783.8V1125.8H2786.2H2786.2V1130.1H2788.6H2788.6V1136.9H2790.4H2790.4V1131.3H2791.8H2791.8V1124.7H2794.2H2794.2V1129.6H2796.6H2796.6V1128.9H2799.0H2799.0V1124.6H2800.8H2800.8V1123.6H2801.8H2801.8V1121.6H2803.0H2803.0V1129.9H2804.0H2804.0V1123.4H2805.8H2805.8V1133.4H2807.2H2807.2V1130.8H2809.0H2809.0V1126.4H2810.8H2810.8V1127.5H2812.0H2812.0V1123.4H2813.4H2813.4V1127.1H2815.2H2815.2V1137.0H2816.6H2816.6V1133.4H2818.4H2818.4V1128.8H2819.8H2819.8V1125.6H2820.8H2820.8V1134.9H2822.2H2822.2V1121.9H2823.6H2823.6V1125.9H2824.6H2824.6V1123.9H2826.0H2826.0V1128.9H2827.4H2827.4V1134.6H2828.6H2828.6V1130.4H2830.0H2830.0V1121.4H2832.4H2832.4V1132.4H2834.8H2834.8V1123.5H2836.6H2836.6V1123.1H2837.6H2837.6V1122.4H2839.4V1141.2Z" fill="#63bcf9"/></svg>
<svg style="left:0;top:1060px" width="3840" height="90" viewBox="0 1060 3840 90"><path d="M2842.0 1117.8 V1103.2H2842.4V1095.1H2843.4H2843.4V1092.5H2844.4H2844.4V1099.4H2845.4H2845.4V1088.1H2846.4H2846.4V1087.0H2848.2H2848.2V1091.8H2850.0H2850.0V1094.5H2852.4H2852.4V1091.4H2854.2H2854.2V1091.0H2856.0H2856.0V1087.1H2857.4H2857.4V1092.9H2859.2H2859.2V1087.7H2861.0H2861.0V1095.1H2862.2H2862.2V1087.5H2863.4H2863.4V1087.8H2864.6H2864.6V1093.0H2866.0H2866.0V1088.8H2867.4H2867.4V1094.4H2869.8H2869.8V1097.0H2871.0H2871.0V1092.4H2872.4H2872.4V1089.7H2873.8H2873.8V1094.1H2875.2H2875.2V1099.9H2876.6H2876.6V1097.1H2879.0H2879.0V1096.5H2881.4H2881.4V1086.4H2882.8H2882.8V1090.6H2884.0H2884.0V1086.8H2886.4H2886.4V1086.2H2888.8H2888.8V1087.1H2889.8H2889.8V1093.7H2891.2H2891.2V1087.0H2892.4H2892.4V1091.9H2894.8H2894.8V1088.8H2896.2H2896.2V1094.0H2897.4H2897.4V1085.9H2899.8H2899.8V1094.5H2901.2H2901.2V1100.5H2903.0H2903.0V1091.5H2905.4H2905.4V1088.0H2907.8H2907.8V1100.9H2909.2H2909.2V1093.5H2911.6H2911.6V1092.6H2912.6H2912.6V1095.7H2913.8H2913.8V1092.4H2915.0H2915.0V1096.9H2916.4H2916.4V1093.9H2917.6H2917.6V1094.2H2918.8H2918.8V1098.5H2920.2H2920.2V1096.3H2922.6H2922.6V1094.5H2925.0H2925.0V1095.6H2926.0H2926.0V1100.7H2927.0H2927.0V1096.3H2928.2H2928.2V1101.7H2930.6H2930.6V1097.7H2931.6H2931.6V1095.6H2932.8H2932.8V1096.1H2934.2H2934.2V1095.8H2935.2H2935.2V1096.8H2937.0H2937.0V1099.8H2938.0H2938.0V1095.9H2939.4H2939.4V1098.3H2941.8H2941.8V1100.7H2943.0H2943.0V1101.0H2945.4H2945.4V1102.1H2947.2H2947.2V1102.0H2949.0H2949.0V1101.8H2950.0H2950.0V1101.3H2951.0H2951.0V1101.5H2952.2H2952.2V1101.5H2953.2H2953.2V1102.5H2954.6H2954.6V1101.5H2956.0H2956.0V1102.0H2957.8H2957.8V1101.9H2959.0H2959.0V1101.7H2960.8H2960.8V1101.6H2962.2H2962.2V1102.0H2963.6H2963.6V1101.8H2964.6H2964.6V1102.2H2965.6H2965.6V1102.3H2968.0H2968.0V1102.8H2969.2H2969.2V1101.7H2970.2H2970.2V1101.9H2972.6H2972.6V1101.8H2974.4H2974.4V1102.1H2975.6H2975.6V1102.0H2976.8H2976.8V1101.8H2978.0H2978.0V1102.6H2979.0H2979.0V1102.6H2980.8H2980.8V1101.8H2981.8H2981.8V1102.0H2984.2H2984.2V1102.0H2985.4H2985.4V1102.4H2987.2H2987.2V1101.6H2989.0H2989.0V1102.8H2990.8H2990.8V1102.1H2992.0H2992.0V1101.8H2993.4H2993.4V1101.5H2994.4H2994.4V1102.1H2995.4H2995.4V1101.5H2996.4H2996.4V1101.6H2998.8H2998.8V1102.1H3000.2H3000.2V1102.0H3002.6H3002.6V1098.6H3003.6H3003.6V1098.3H3006.0H3006.0V1088.2H3008.4H3008.4V1093.3H3009.4H3009.4V1092.5H3011.8H3011.8V1091.8H3012.8H3012.8V1100.2H3014.2H3014.2V1093.7H3016.6H3016.6V1090.6H3017.8H3017.8V1087.0H3018.8H3018.8V1088.3H3020.6H3020.6V1087.9H3021.6H3021.6V1096.8H3023.0H3023.0V1090.2H3025.4H3025.4V1096.4H3026.4H3026.4V1087.5H3028.2H3028.2V1094.1H3029.6H3029.6V1092.5H3032.0H3032.0V1100.2H3033.8H3033.8V1096.8H3036.2H3036.2V1086.9H3037.6H3037.6V1092.5H3039.0H3039.0V1087.4H3040.8H3040.8V1092.3H3042.0H3042.0V1098.4H3043.2H3043.2V1091.3H3044.6H3044.6V1093.8H3047.0H3047.0V1090.3H3049.4H3049.4V1088.9H3051.8H3051.8V1092.8H3053.6H3053.6V1088.3H3054.8H3054.8V1088.7H3056.6H3056.6V1086.9H3057.6H3057.6V1092.7H3058.8H3058.8V1091.9H3059.8H3059.8V1087.7H3062.2H3062.2V1092.7H3063.2H3063.2V1092.5H3064.2H3064.2V1092.2H3065.6H3065.6V1094.1H3067.4H3067.4V1088.0H3068.8H3068.8V1090.1H3071.2H3071.2V1087.2H3073.0H3073.0V1089.5H3074.8H3074.8V1093.6H3076.0H3076.0V1096.1H3077.0H3077.0V1086.5H3078.4H3078.4V1087.2H3080.2H3080.2V1093.6H3081.0V1117.8Z" fill="#63bcf9"/><path d="M2842.0 1141.2H2842.4V1130.4H2843.4H2843.4V1127.6H2844.4H2844.4V1136.0H2845.4H2845.4V1121.6H2846.4H2846.4V1121.8H2848.2H2848.2V1126.3H2850.0H2850.0V1130.1H2852.4H2852.4V1126.5H2854.2H2854.2V1125.0H2856.0H2856.0V1122.2H2857.4H2857.4V1127.7H2859.2H2859.2V1123.8H2861.0H2861.0V1131.1H2862.2H2862.2V1122.2H2863.4H2863.4V1122.4H2864.6H2864.6V1128.9H2866.0H2866.0V1124.6H2867.4H2867.4V1130.7H2869.8H2869.8V1133.4H2871.0H2871.0V1128.8H2872.4H2872.4V1125.3H2873.8H2873.8V1130.7H2875.2H2875.2V1136.3H2876.6H2876.6V1133.0H2879.0H2879.0V1132.5H2881.4H2881.4V1119.9H2882.8H2882.8V1126.6H2884.0H2884.0V1122.9H2886.4H2886.4V1122.2H2888.8H2888.8V1120.0H2889.8H2889.8V1129.1H2891.2H2891.2V1121.0H2892.4H2892.4V1128.2H2894.8H2894.8V1124.9H2896.2H2896.2V1129.6H2897.4H2897.4V1121.3H2899.8H2899.8V1129.5H2901.2H2901.2V1137.2H2903.0H2903.0V1127.8H2905.4H2905.4V1123.4H2907.8H2907.8V1137.6H2909.2H2909.2V1128.5H2911.6H2911.6V1128.3H2912.6H2912.6V1132.5H2913.8H2913.8V1128.2H2915.0H2915.0V1133.5H2916.4H2916.4V1128.8H2917.6H2917.6V1129.9H2918.8H2918.8V1135.4H2920.2H2920.2V1131.9H2922.6H2922.6V1130.5H2925.0H2925.0V1131.8H2926.0H2926.0V1137.3H2927.0H2927.0V1132.7H2928.2H2928.2V1138.5H2930.6H2930.6V1133.5H2931.6H2931.6V1132.0H2932.8H2932.8V1131.8H2934.2H2934.2V1131.2H2935.2H2935.2V1133.4H2937.0H2937.0V1136.7H2938.0H2938.0V1131.9H2939.4H2939.4V1135.2H2941.8H2941.8V1137.3H2943.0H2943.0V1138.0H2945.4H2945.4V1139.2H2947.2H2947.2V1138.9H2949.0H2949.0V1138.8H2950.0H2950.0V1138.3H2951.0H2951.0V1138.6H2952.2H2952.2V1138.6H2953.2H2953.2V1139.7H2954.6H2954.6V1138.4H2956.0H2956.0V1138.9H2957.8H2957.8V1138.8H2959.0H2959.0V1138.8H2960.8H2960.8V1138.4H2962.2H2962.2V1139.0H2963.6H2963.6V1138.9H2964.6H2964.6V1139.1H2965.6H2965.6V1139.4H2968.0H2968.0V1140.0H2969.2H2969.2V1138.8H2970.2H2970.2V1139.0H2972.6H2972.6V1138.8H2974.4H2974.4V1139.1H2975.6H2975.6V1138.9H2976.8H2976.8V1138.9H2978.0H2978.0V1139.7H2979.0H2979.0V1139.7H2980.8H2980.8V1138.8H2981.8H2981.8V1138.9H2984.2H2984.2V1139.0H2985.4H2985.4V1139.4H2987.2H2987.2V1138.4H2989.0H2989.0V1139.9H2990.8H2990.8V1139.2H2992.0H2992.0V1138.6H2993.4H2993.4V1138.2H2994.4H2994.4V1139.2H2995.4H2995.4V1138.3H2996.4H2996.4V1138.7H2998.8H2998.8V1139.1H3000.2H3000.2V1139.0H3002.6H3002.6V1134.8H3003.6H3003.6V1134.3H3006.0H3006.0V1124.0H3008.4H3008.4V1128.3H3009.4H3009.4V1127.6H3011.8H3011.8V1127.2H3012.8H3012.8V1137.1H3014.2H3014.2V1129.2H3016.6H3016.6V1125.4H3017.8H3017.8V1121.4H3018.8H3018.8V1123.2H3020.6H3020.6V1121.1H3021.6H3021.6V1133.6H3023.0H3023.0V1126.1H3025.4H3025.4V1132.7H3026.4H3026.4V1123.8H3028.2H3028.2V1129.6H3029.6H3029.6V1126.8H3032.0H3032.0V1137.1H3033.8H3033.8V1133.0H3036.2H3036.2V1119.9H3037.6H3037.6V1128.3H3039.0H3039.0V1122.4H3040.8H3040.8V1128.7H3042.0H3042.0V1134.6H3043.2H3043.2V1126.1H3044.6H3044.6V1129.0H3047.0H3047.0V1126.1H3049.4H3049.4V1122.5H3051.8H3051.8V1128.5H3053.6H3053.6V1122.9H3054.8H3054.8V1122.7H3056.6H3056.6V1121.9H3057.6H3057.6V1128.2H3058.8H3058.8V1126.7H3059.8H3059.8V1123.8H3062.2H3062.2V1127.7H3063.2H3063.2V1127.7H3064.2H3064.2V1128.2H3065.6H3065.6V1129.2H3067.4H3067.4V1123.6H3068.8H3068.8V1124.4H3071.2H3071.2V1121.0H3073.0H3073.0V1123.5H3074.8H3074.8V1129.0H3076.0H3076.0V1132.8H3077.0H3077.0V1120.7H3078.4H3078.4V1121.1H3080.2H3080.2V1128.9H3081.0V1141.2Z" fill="#63bcf9"/></svg>
<div class="a" style="left:2192.80px;top:1103.60px;width:885.20px;height:1.50px;background:#e9eef2;"></div>
<div class="a" style="left:2192.80px;top:1105.10px;width:885.20px;height:1.20px;background:#0f3c52;"></div>
<div class="a" style="left:2354.60px;top:1064.80px;width:2.50px;height:76.00px;background:#1d2427;"></div>
<div class="a" style="left:2839.40px;top:1064.80px;width:2.50px;height:76.00px;background:#1d2427;"></div>
<div class="a" style="left:2196.00px;top:1098.00px;width:11.60px;height:14.00px;background:rgba(30,60,78,.72);"></div>
<div class="t" style="left:2198.59px;top:1098.60px;font-size:10.5px;line-height:14px;color:#e6eef3;font-weight:700;-webkit-text-stroke:0;">L</div>
<div class="a" style="left:2196.00px;top:1130.00px;width:11.60px;height:12.00px;background:rgba(30,60,78,.72);"></div>
<div class="t" style="left:2198.01px;top:1130.40px;font-size:10.5px;line-height:14px;color:#e6eef3;font-weight:700;-webkit-text-stroke:0;">R</div>
<div class="a" style="left:2359.40px;top:1098.00px;width:11.60px;height:14.00px;background:rgba(30,60,78,.72);"></div>
<div class="t" style="left:2361.99px;top:1098.60px;font-size:10.5px;line-height:14px;color:#e6eef3;font-weight:700;-webkit-text-stroke:0;">L</div>
<div class="a" style="left:2359.40px;top:1130.00px;width:11.60px;height:12.00px;background:rgba(30,60,78,.72);"></div>
<div class="t" style="left:2361.41px;top:1130.40px;font-size:10.5px;line-height:14px;color:#e6eef3;font-weight:700;-webkit-text-stroke:0;">R</div>
<div class="a" style="left:2844.00px;top:1098.00px;width:11.60px;height:14.00px;background:rgba(30,60,78,.72);"></div>
<div class="t" style="left:2846.59px;top:1098.60px;font-size:10.5px;line-height:14px;color:#e6eef3;font-weight:700;-webkit-text-stroke:0;">L</div>
<div class="a" style="left:2844.00px;top:1130.00px;width:11.60px;height:12.00px;background:rgba(30,60,78,.72);"></div>
<div class="t" style="left:2846.01px;top:1130.40px;font-size:10.5px;line-height:14px;color:#e6eef3;font-weight:700;-webkit-text-stroke:0;">R</div>
<svg style="left:2304.00px;top:1070.60px;" width="15.50" height="10.50" viewBox="0 0 15.5 10.5" preserveAspectRatio="none"><path d="M4.6 0 A4.6 4.6 0 0 1 9 5.6 L8.2 7.2 V9.4 H4.4 V10.5 H2.6 V7.6 A4.6 4.6 0 0 1 4.6 0 Z" fill="#e8f1f6"/><path d="M11 2.6 A3.8 3.8 0 0 1 11 7.6 M13.2 1 A6.2 6.2 0 0 1 13.2 9.2" fill="none" stroke="#e8f1f6" stroke-width="1.2"/></svg>
<div class="t" style="left:2332.40px;top:1067.00px;font-size:14px;line-height:18px;color:#467a93;font-style:italic;transform:scaleX(0.9183);">fx</div>
<svg style="left:2791.00px;top:1070.60px;" width="15.50" height="10.50" viewBox="0 0 15.5 10.5" preserveAspectRatio="none"><path d="M4.6 0 A4.6 4.6 0 0 1 9 5.6 L8.2 7.2 V9.4 H4.4 V10.5 H2.6 V7.6 A4.6 4.6 0 0 1 4.6 0 Z" fill="#e8f1f6"/><path d="M11 2.6 A3.8 3.8 0 0 1 11 7.6 M13.2 1 A6.2 6.2 0 0 1 13.2 9.2" fill="none" stroke="#e8f1f6" stroke-width="1.2"/></svg>
<div class="t" style="left:2819.40px;top:1067.00px;font-size:14px;line-height:18px;color:#467a93;font-style:italic;transform:scaleX(0.9183);">fx</div>
</div></div>
</div></div>
<div class="a" style="left:2398.00px;top:977.00px;width:2.50px;height:164.00px;background:#4096f0;"></div>
<svg style="left:2390.80px;top:964.20px;" width="17.20" height="14.80" viewBox="0 0 17.2 14.8" preserveAspectRatio="none"><path d="M1.4 0 H15.8 A1.4 1.4 0 0 1 17.2 1.4 V9 L9.8 14.6 H7.4 L0 9 V1.4 A1.4 1.4 0 0 1 1.4 0 Z" fill="#4096f0"/><rect x="7.9" y="11" width="1.4" height="3" fill="#1f4f8a"/></svg>
<div class="a" style="left:1940.00px;top:1058.30px;width:252.40px;height:6.40px;background:#333333;"></div>
<svg style="left:1994.80px;top:988.00px;" width="13.20" height="15.60" viewBox="0 0 13.2 15.6" preserveAspectRatio="none"><path d="M2.4 6.6 V4.2 A3.3 3.3 0 0 1 9 4 V4.6 H7.4 V4.1 A1.75 1.75 0 0 0 4 4.2 V6.6 Z" fill="#bdbdbd"/><path d="M0 6.4 H13.2 V15.6 H0 Z M6.6 8.6 A1.5 1.5 0 0 0 5.9 11.4 V13.4 H7.3 V11.4 A1.5 1.5 0 0 0 6.6 8.6 Z" fill="#bdbdbd" fill-rule="evenodd"/></svg>
<svg style="left:1994.80px;top:1099.30px;" width="13.20" height="15.60" viewBox="0 0 13.2 15.6" preserveAspectRatio="none"><path d="M2.4 6.6 V4.2 A3.3 3.3 0 0 1 9 4 V4.6 H7.4 V4.1 A1.75 1.75 0 0 0 4 4.2 V6.6 Z" fill="#bdbdbd"/><path d="M0 6.4 H13.2 V15.6 H0 Z M6.6 8.6 A1.5 1.5 0 0 0 5.9 11.4 V13.4 H7.3 V11.4 A1.5 1.5 0 0 0 6.6 8.6 Z" fill="#bdbdbd" fill-rule="evenodd"/></svg>
<div class="t" style="left:2022.90px;top:988.80px;font-size:13.4px;line-height:17px;color:#c6c6c6;transform:scaleX(0.8602);">V1</div>
<div class="t" style="left:2050.40px;top:987.80px;font-size:14.6px;line-height:19px;color:#dadada;transform:scaleX(0.9055);">Video 1</div>
<svg style="left:2056.40px;top:1019.90px;" width="7.60" height="13.10" viewBox="0 0 7.6 13.1" preserveAspectRatio="none"><path d="M7.6 0 V13.1 L0 6.55 Z" fill="#7d7d7d"/></svg>
<svg style="left:2115.20px;top:1019.90px;" width="7.80" height="13.10" viewBox="0 0 7.8 13.1" preserveAspectRatio="none"><path d="M0 0 V13.1 L7.8 6.55 Z" fill="#7d7d7d"/></svg>
<svg style="left:2082.30px;top:1019.40px;" width="14.00" height="14.00" viewBox="0 0 14 14" preserveAspectRatio="none"><path d="M7 0.9 L13.1 7 L7 13.1 L0.9 7 Z" fill="#373737" stroke="#757575" stroke-width="1.2"/></svg>
<svg style="left:2052.40px;top:1086.70px;" width="15.60" height="11.60" viewBox="0 0 15.6 11.6" preserveAspectRatio="none"><rect x="0.7" y="0.7" width="10.4" height="3.7" fill="none" stroke="#bdbdbd" stroke-width="1.4"/><rect x="0.7" y="7.2" width="10.4" height="3.7" fill="none" stroke="#bdbdbd" stroke-width="1.4"/><path d="M11.4 1.6 H15.6 V8.2 H11.4 V6.6 H14 V3.2 H11.4 Z" fill="#bdbdbd"/></svg>
<div class="t" style="left:2084.80px;top:1085.00px;font-size:12.6px;line-height:16px;color:#c9c9c9;transform:scaleX(0.9337);">M</div>
<div class="t" style="left:2115.60px;top:1085.00px;font-size:12.6px;line-height:16px;color:#c9c9c9;transform:scaleX(0.8805);">S</div>
<svg style="left:2142.40px;top:1084.20px;" width="11.80" height="17.60" viewBox="0 0 11.8 17.6" preserveAspectRatio="none"><rect x="3.4" y="0" width="5" height="10.6" rx="2.5" fill="#767676"/><path d="M0.7 7.4 V8.4 A5.2 5.2 0 0 0 11.1 8.4 V7.4" fill="none" stroke="#767676" stroke-width="1.3"/><path d="M5.9 13.6 V16.4 M2.6 16.9 H9.2" stroke="#767676" stroke-width="1.3"/></svg>
<div class="t" style="left:2022.90px;top:1100.10px;font-size:13.4px;line-height:17px;color:#c6c6c6;transform:scaleX(0.8602);">A1</div>
<div class="t" style="left:2050.40px;top:1113.70px;font-size:14.6px;line-height:19px;color:#dadada;transform:scaleX(0.9067);">Audio 1</div>
<div class="a" style="left:1350.50px;top:1172.00px;width:1727.50px;height:2.20px;background:#050505;"></div>
<div class="a" style="left:1350.50px;top:1174.20px;width:1727.50px;height:14.00px;background:#202020;"></div>
</div></div>
<div class="a" style="left:711.40px;top:599.90px;width:6.00px;height:39.90px;background:#000;border-radius:2px"></div>
<div class="a" style="left:711.40px;top:670.10px;width:6.00px;height:64.80px;background:#000;border-radius:2px"></div>
<div class="a" style="left:711.40px;top:753.10px;width:6.00px;height:63.80px;background:#000;border-radius:2px"></div>
<div class="a" style="left:1128.00px;top:692.10px;width:6.40px;height:103.20px;background:#000;border-radius:2px"></div>
<div class="a" style="left:714.50px;top:421.10px;width:417.30px;height:861.70px;background:#000;border-radius:80px"></div>
<div class="a" style="left:733.5px;top:439.8px;width:379.0999999999999px;height:819.6000000000001px;border-radius:58px;overflow:hidden;background:radial-gradient(ellipse 62% 50% at 6% 36%,rgba(66,54,52,.95),rgba(66,54,52,0) 100%),radial-gradient(ellipse 70% 40% at 20% 85%,rgba(48,40,40,.9),rgba(48,40,40,0) 100%),linear-gradient(155deg,#3f4549 0%,#454b4f 30%,#41474b 55%,#343c40 80%,#2d3337 100%)">
<div class="a" style="left:-733.5px;top:-439.8px;width:3840px;height:1400px">
<div class="a" style="left:862.40px;top:450.00px;width:121.40px;height:35.80px;background:#000;border-radius:18px"></div>
<div class="t" style="left:785.00px;top:456.50px;font-size:2.8px;line-height:4px;color:rgba(235,235,235,.75);-webkit-text-stroke:0;">9:41</div>
<svg style="left:1005.00px;top:463.20px;" width="19.50" height="11.60" viewBox="0 0 19.5 11.6" preserveAspectRatio="none"><rect x="0" y="7.6" width="3.4" height="4" rx="1" fill="#fff"/><rect x="5.3" y="5.4" width="3.4" height="6.2" rx="1" fill="#fff"/><rect x="10.6" y="2.9" width="3.4" height="8.7" rx="1" fill="#fff"/><rect x="15.9" y="0" width="3.4" height="11.6" rx="1" fill="#fff"/></svg>
<svg style="left:1030.60px;top:462.60px;" width="16.40" height="12.00" viewBox="0 0 16.4 12" preserveAspectRatio="none"><path d="M8.2 2.3 A9.6 9.6 0 0 1 14.9 5 L16.2 3.6 A11.5 11.5 0 0 0 0.2 3.6 L1.5 5 A9.6 9.6 0 0 1 8.2 2.3 Z" fill="#fff"/><path d="M8.2 6.2 A5.8 5.8 0 0 1 12.2 7.8 L13.5 6.4 A7.6 7.6 0 0 0 2.9 6.4 L4.2 7.8 A5.8 5.8 0 0 1 8.2 6.2 Z" fill="#fff"/><path d="M8.2 12 L10.8 9.2 A3.7 3.7 0 0 0 5.6 9.2 Z" fill="#fff"/></svg>
<svg style="left:1055.00px;top:462.40px;" width="26.00" height="12.40" viewBox="0 0 26 12.4" preserveAspectRatio="none"><rect x="0.5" y="0.5" width="22.6" height="11.4" rx="3.6" fill="none" stroke="#fff" stroke-opacity=".45" stroke-width="1"/><rect x="2" y="2" width="19.6" height="8.4" rx="2.3" fill="#fff"/><rect x="24.3" y="4.3" width="1.4" height="3.8" rx=".7" fill="#fff" fill-opacity=".5"/></svg>
<div class="t" style="left:895.35px;top:509.10px;font-size:17.6px;line-height:23px;color:#e3e3e3;font-weight:700;-webkit-text-stroke:0;transform:scaleX(0.9239);">Export</div>
<div class="a" style="left:1063.50px;top:504.50px;width:29.00px;height:29.00px;background:#55595d;border-radius:50%"></div>
<svg style="left:1072.60px;top:513.60px;" width="10.80" height="10.80" viewBox="0 0 10.8 10.8" preserveAspectRatio="none"><path d="M1 1 L9.8 9.8 M9.8 1 L1 9.8" stroke="#f2f2f2" stroke-width="1.7" stroke-linecap="round"/></svg>
<div class="a" style="left:749.50px;top:556.00px;width:342.50px;height:30.00px;background:#4b4e52;border-radius:7px"></div>
<div class="a" style="left:921.00px;top:557.60px;width:169.40px;height:26.80px;background:#626165;border-radius:6px"></div>
<div class="t" style="left:758.50px;top:561.80px;font-size:2.6px;line-height:3px;color:rgba(225,225,225,.7);-webkit-text-stroke:0;">Video</div>
<div class="t" style="left:930.50px;top:561.80px;font-size:2.6px;line-height:3px;color:rgba(235,235,235,.75);-webkit-text-stroke:0;">Send to desktop</div>
<div class="a" style="left:802.4px;top:605.3px;width:241px;height:427.8px;border-radius:8px;overflow:hidden"><svg style="left:0;top:0" width="241" height="427.8" viewBox="0 0 426 758" preserveAspectRatio="none"><use href="#kayak"/></svg></div>
<div class="t" style="left:749.70px;top:1050.70px;font-size:15.4px;line-height:20px;color:#e2e2e2;transform:scaleX(0.9755);">A copy of this project will be sent to Premiere on</div>
<div class="t" style="left:749.70px;top:1071.80px;font-size:15.4px;line-height:20px;color:#e2e2e2;transform:scaleX(0.9604);">desktop via Adobe cloud storage.</div>
<div class="t" style="left:749.70px;top:1104.00px;font-size:15.4px;line-height:20px;color:#dcdcdc;transform:scaleX(0.9105);">Files:</div>
<div class="t" style="left:790.60px;top:1104.00px;font-size:15.4px;line-height:20px;color:#f0f0f0;font-weight:700;-webkit-text-stroke:0;transform:scaleX(0.8406);">16</div>
<div class="t" style="left:821.30px;top:1104.00px;font-size:15.4px;line-height:20px;color:#dcdcdc;transform:scaleX(0.8762);">Size:</div>
<div class="t" style="left:860.30px;top:1104.00px;font-size:15.4px;line-height:20px;color:#f0f0f0;font-weight:700;-webkit-text-stroke:0;transform:scaleX(0.9476);">520 MB</div>
<div class="a" style="left:749.70px;top:1150.20px;width:346.70px;height:38.90px;background:#3d5cf5;border-radius:20px"></div>
<div class="t" style="left:879.80px;top:1160.20px;font-size:15.8px;line-height:21px;color:#ffffff;font-weight:700;-webkit-text-stroke:0;transform:scaleX(0.9008);">Send project</div>
<div class="t" style="left:798.60px;top:1204.00px;font-size:15.2px;line-height:20px;color:#4c5256;transform:scaleX(0.9866);">Learn more about supported features</div>
<div class="a" style="left:858.70px;top:1246.00px;width:128.40px;height:5.00px;background:#fff;border-radius:3px"></div>
</div></div>
</body></html>
